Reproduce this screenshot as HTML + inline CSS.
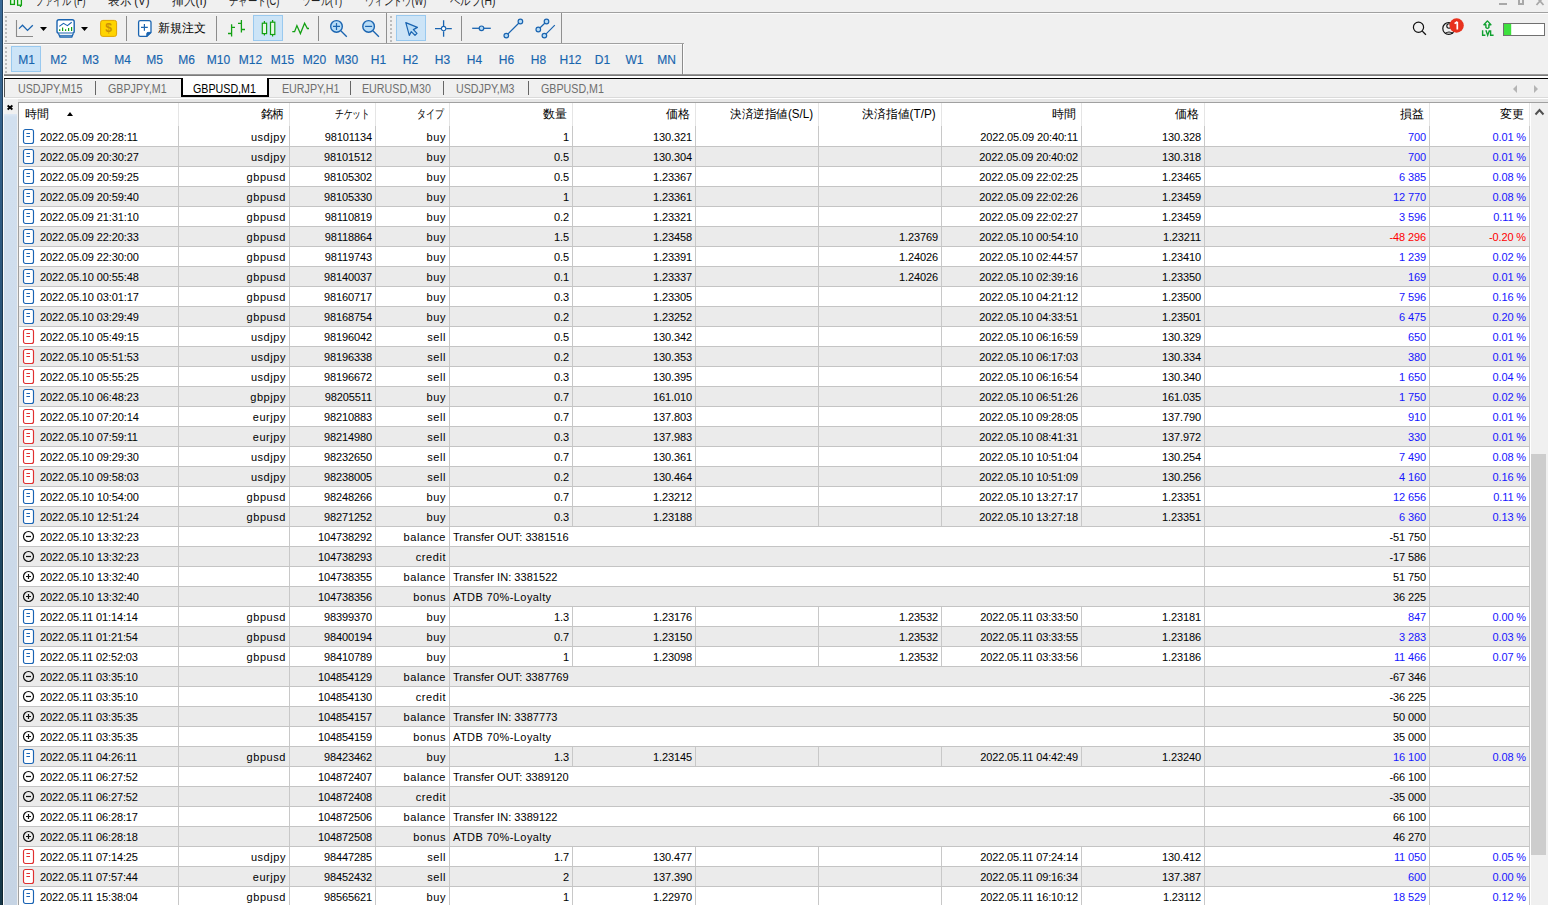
<!DOCTYPE html><html><head><meta charset="utf-8"><style>
*{margin:0;padding:0;box-sizing:border-box}
html,body{width:1548px;height:905px;overflow:hidden;background:#f0f0f0;font-family:"Liberation Sans", sans-serif;font-size:11px;color:#000;position:relative}
.a{position:absolute}
.t{position:absolute;white-space:nowrap;line-height:20px;letter-spacing:-0.12px}
.r{text-align:right}
.hl{position:absolute;height:1px}
.vl{position:absolute;width:1px}
.tf{position:absolute;top:47px;height:26px;width:31px;text-align:center;line-height:26px;color:#1865ae;font-size:12px;-webkit-text-stroke:0.15px #1865ae}
.tab{position:absolute;top:80px;line-height:18px;color:#6e6e6e;font-size:12px;white-space:nowrap;transform:scaleX(0.89);transform-origin:left}
.mn{position:absolute;top:-6px;line-height:14px;color:#222;font-size:12px;white-space:nowrap}
</style></head><body><div class="a" style="left:0;top:0;width:3px;height:905px;background:linear-gradient(#3a6a98,#2a5478 35%,#1a4258 75%,#173848)"></div>
<div class="a" style="left:2px;top:0;width:1px;height:905px;background:rgba(0,0,0,0.35)"></div>
<div class="a" style="left:3px;top:0;width:1px;height:905px;background:#fafafa"></div>
<div class="mn" style="left:35px;transform:scaleX(0.76);transform-origin:left">ファイル (F)</div>
<div class="mn" style="left:108px;transform:scaleX(0.96);transform-origin:left">表示 (V)</div>
<div class="mn" style="left:172px;transform:scaleX(0.98);transform-origin:left">挿入(I)</div>
<div class="mn" style="left:229px;transform:scaleX(0.78);transform-origin:left">チャート(C)</div>
<div class="mn" style="left:302px;transform:scaleX(0.78);transform-origin:left">ツール(T)</div>
<div class="mn" style="left:365px;transform:scaleX(0.775);transform-origin:left">ウィンドウ(W)</div>
<div class="mn" style="left:450px;transform:scaleX(0.864);transform-origin:left">ヘルプ(H)</div>
<svg class="a" style="left:8px;top:0" width="16" height="10"><path d="M12.5 4.9V7M19.5 5.7V8.8" stroke="#10a010" stroke-width="1.3"/><rect x="10.6" y="-2" width="3.8" height="6.4" fill="#e4ffe4" stroke="#10a010" stroke-width="1.3" transform="translate(-8 0)"/><rect x="17.6" y="-2" width="3.8" height="7.2" fill="#e4ffe4" stroke="#10a010" stroke-width="1.3" transform="translate(-8 0)"/></svg>
<div class="a" style="left:1499px;top:3px;width:8px;height:2px;background:#a8a8a8"></div>
<div class="a" style="left:1518px;top:-3px;width:6px;height:8px;border:2px solid #a8a8a8"></div>
<svg class="a" style="left:1535px;top:0" width="11" height="6"><path d="M1.5 -3L8.5 5M8.5 -3L1.5 5" stroke="#a8a8a8" stroke-width="1.8"/></svg>
<div class="hl" style="left:4px;top:12px;width:1544px;background:#a0a0a0"></div>
<div class="hl" style="left:4px;top:13px;width:1544px;background:#fcfcfc"></div>
<div class="hl" style="left:4px;top:43px;width:680px;background:#a0a0a0"></div>
<div class="hl" style="left:4px;top:44px;width:679px;background:#fcfcfc"></div>
<div class="vl" style="left:683px;top:44px;height:31px;background:#fcfcfc"></div>
<div class="a" style="left:4px;top:74px;width:1544px;height:2px;background:linear-gradient(#a8a8a8,#6c6c6c)"></div>
<div class="a" style="left:4px;top:76px;width:1544px;height:2px;background:#ffffff"></div>
<div class="hl" style="left:4px;top:78px;width:1544px;background:#000"></div>
<div class="a" style="left:11px;top:46px;width:30px;height:26px;background:#cce4f7;border:1px solid #99c9ef"></div>
<div class="tf" style="left:11px">M1</div>
<div class="tf" style="left:43px">M2</div>
<div class="tf" style="left:75px">M3</div>
<div class="tf" style="left:107px">M4</div>
<div class="tf" style="left:139px">M5</div>
<div class="tf" style="left:171px">M6</div>
<div class="tf" style="left:203px">M10</div>
<div class="tf" style="left:235px">M12</div>
<div class="tf" style="left:267px">M15</div>
<div class="tf" style="left:299px">M20</div>
<div class="tf" style="left:331px">M30</div>
<div class="tf" style="left:363px">H1</div>
<div class="tf" style="left:395px">H2</div>
<div class="tf" style="left:427px">H3</div>
<div class="tf" style="left:459px">H4</div>
<div class="tf" style="left:491px">H6</div>
<div class="tf" style="left:523px">H8</div>
<div class="tf" style="left:555px">H12</div>
<div class="tf" style="left:587px">D1</div>
<div class="tf" style="left:619px">W1</div>
<div class="tf" style="left:651px">MN</div>
<div class="vl" style="left:682px;top:44px;height:31px;background:#8c8c8c"></div>
<div class="a" style="left:5px;top:16px;width:2px;height:2px;background:#bcbcbc"></div><div class="a" style="left:5px;top:20px;width:2px;height:2px;background:#bcbcbc"></div><div class="a" style="left:5px;top:24px;width:2px;height:2px;background:#bcbcbc"></div><div class="a" style="left:5px;top:28px;width:2px;height:2px;background:#bcbcbc"></div><div class="a" style="left:5px;top:32px;width:2px;height:2px;background:#bcbcbc"></div><div class="a" style="left:5px;top:36px;width:2px;height:2px;background:#bcbcbc"></div><div class="a" style="left:5px;top:40px;width:2px;height:2px;background:#bcbcbc"></div><div class="a" style="left:390px;top:16px;width:2px;height:2px;background:#bcbcbc"></div><div class="a" style="left:390px;top:20px;width:2px;height:2px;background:#bcbcbc"></div><div class="a" style="left:390px;top:24px;width:2px;height:2px;background:#bcbcbc"></div><div class="a" style="left:390px;top:28px;width:2px;height:2px;background:#bcbcbc"></div><div class="a" style="left:390px;top:32px;width:2px;height:2px;background:#bcbcbc"></div><div class="a" style="left:390px;top:36px;width:2px;height:2px;background:#bcbcbc"></div><div class="a" style="left:390px;top:40px;width:2px;height:2px;background:#bcbcbc"></div><div class="a" style="left:5px;top:47px;width:2px;height:2px;background:#bcbcbc"></div><div class="a" style="left:5px;top:51px;width:2px;height:2px;background:#bcbcbc"></div><div class="a" style="left:5px;top:55px;width:2px;height:2px;background:#bcbcbc"></div><div class="a" style="left:5px;top:59px;width:2px;height:2px;background:#bcbcbc"></div><div class="a" style="left:5px;top:63px;width:2px;height:2px;background:#bcbcbc"></div><div class="a" style="left:5px;top:67px;width:2px;height:2px;background:#bcbcbc"></div><div class="a" style="left:5px;top:71px;width:2px;height:2px;background:#bcbcbc"></div><div class="a" style="left:253px;top:15px;width:30px;height:26px;background:#cce4f7;border:1px solid #99c9ef"></div><div class="a" style="left:396px;top:15px;width:30px;height:26px;background:#cce4f7;border:1px solid #99c9ef"></div><svg class="a" style="left:0;top:13px" width="600" height="30" viewBox="0 13 600 30">
<g fill="none" stroke-linecap="butt">
<!-- line chart axes -->
<path d="M16.5 20 V36.5 H33" stroke="#8a8a8a" stroke-width="1.1"/>
<path d="M19 28.6 L22.5 25.2 L27.5 30.4 L32.8 25.2" stroke="#1a64b0" stroke-width="1.3"/>
<path d="M40 27 H47 L43.5 31 Z" fill="#000" stroke="none"/>
<!-- chart template -->
<rect x="57" y="19.7" width="17.2" height="13.6" rx="2" fill="#fff" stroke="#1a64b0" stroke-width="1.4"/>
<path d="M58.5 33.5 L60 37 H71.8 L73.3 33.5" fill="#fff" stroke="#1a64b0" stroke-width="1.3"/>
<path d="M59.5 35.4 H72.3" stroke="#1a64b0" stroke-width="0.9"/>
<path d="M59.3 26.4 L63.5 23.3 L67.4 25.6 L71.7 22.3" stroke="#1a64b0" stroke-width="1.1"/>
<path d="M59.7 31 V29.2 M62.6 31 V27.4 M65.6 31 V29.2 M68.6 31 V28.1 M71.6 31 V27" stroke="#12a012" stroke-width="1.2"/>
<path d="M81 27 H88 L84.5 31 Z" fill="#000" stroke="none"/>
<!-- dollar -->
<rect x="100.6" y="20.4" width="16" height="16" rx="2.2" fill="#ffd400" stroke="#e0a400" stroke-width="1"/>
<!-- separator -->
<path d="M126.5 16 V41" stroke="#8c8c8c" stroke-width="1"/>
<!-- new order -->
<path d="M140.2 20.6 H149 Q151 20.6 151 22.6 V32.4 L146.8 36.4 H140.2 Q138.6 36.4 138.6 34.8 V22.2 Q138.6 20.6 140.2 20.6 Z" fill="#fff" stroke="#1a64b0" stroke-width="1.3"/>
<path d="M151 32.4 H148 Q146.8 32.4 146.8 33.6 V36.4 Z" fill="#1a64b0" stroke="#1a64b0" stroke-width="1"/>
<path d="M141 27.4 H147.8 M144.4 24 V30.8" stroke="#1a64b0" stroke-width="1.2"/>
<path d="M216.5 16 V41" stroke="#8c8c8c" stroke-width="1"/>
<!-- bar chart -->
<path d="M231.6 24.3 V36.6 M228 33.5 H231.6 M231.6 27.3 H235 M241.4 20.1 V32.4 M238 23.3 H241.4 M241.4 29.5 H245" stroke="#12a012" stroke-width="1.3"/>
<!-- candles (highlight box drawn separately) -->
<path d="M264.4 21 V35.6 M272.6 20.1 V36.6" stroke="#12a012" stroke-width="1.2"/>
<rect x="262.3" y="23.2" width="4.3" height="10.4" fill="#e6f8e6" stroke="#12a012" stroke-width="1.2"/>
<rect x="270.5" y="22.2" width="4.3" height="12.3" fill="#e6f8e6" stroke="#12a012" stroke-width="1.2"/>
<!-- line -->
<path d="M292.3 31.7 H294.6 L296.9 25.6 L300.4 33.6 L304.6 23.3 L307.4 28.5 H309" stroke="#12a012" stroke-width="1.3" stroke-linejoin="miter"/>
<path d="M318.5 16 V41" stroke="#8c8c8c" stroke-width="1"/>
<!-- zoom in -->
<circle cx="336.5" cy="26.4" r="5.8" fill="#b8dcf6" stroke="#1a64b0" stroke-width="1.4"/>
<path d="M333 26.4 H340 M336.5 22.9 V29.9" stroke="#1a64b0" stroke-width="1.2"/>
<path d="M340.8 30.8 L346.8 36.7" stroke="#1a64b0" stroke-width="1.3"/>
<!-- zoom out -->
<circle cx="368.6" cy="26.4" r="5.8" fill="#b8dcf6" stroke="#1a64b0" stroke-width="1.4"/>
<path d="M365.1 26.4 H372.1" stroke="#1a64b0" stroke-width="1.2"/>
<path d="M372.9 30.8 L378.9 36.7" stroke="#1a64b0" stroke-width="1.3"/>
<path d="M386.5 13 V43" stroke="#909090" stroke-width="1"/>
<!-- arrow -->
<path d="M405.8 22.6 L417.4 27.4 L413.4 29.6 L417 33.4 L415 35.4 L411.3 31.6 L409.3 35.4 Z" fill="#b8dcf6" stroke="#1a64b0" stroke-width="1.2" stroke-linejoin="round"/>
<!-- crosshair -->
<path d="M435 28.6 H441 M446.2 28.6 H451.8 M443.6 20.2 V26 M443.6 31.2 V36.8" stroke="#1a64b0" stroke-width="1.3"/>
<circle cx="443.6" cy="28.6" r="2.2" fill="#fff" stroke="#1a64b0" stroke-width="1.1"/>
<path d="M461.5 16 V41" stroke="#8c8c8c" stroke-width="1"/>
<!-- hline -->
<path d="M472.2 28.3 H490.8" stroke="#1a64b0" stroke-width="1.3"/>
<circle cx="481.5" cy="28.3" r="2.3" fill="#b8dcf6" stroke="#1a64b0" stroke-width="1.2"/>
<!-- trend -->
<path d="M506.3 35.6 L520.4 21.5" stroke="#1a64b0" stroke-width="1.2"/>
<circle cx="506.3" cy="35.6" r="2.3" fill="#b8dcf6" stroke="#1a64b0" stroke-width="1.2"/>
<circle cx="520.4" cy="21.5" r="2.3" fill="#b8dcf6" stroke="#1a64b0" stroke-width="1.2"/>
<!-- channel -->
<path d="M538.3 29.5 L546.5 21.5 M544.4 35.6 L554.8 25.2" stroke="#1a64b0" stroke-width="1.2"/>
<circle cx="538.3" cy="29.5" r="2.3" fill="#b8dcf6" stroke="#1a64b0" stroke-width="1.2"/>
<circle cx="546.5" cy="21.5" r="2.3" fill="#b8dcf6" stroke="#1a64b0" stroke-width="1.2"/>
<circle cx="544.4" cy="35.6" r="2.3" fill="#b8dcf6" stroke="#1a64b0" stroke-width="1.2"/>
<path d="M561.5 13 V43" stroke="#909090" stroke-width="1"/>
</g>
</svg><svg class="a" style="left:1400px;top:13px" width="148" height="30" viewBox="1400 13 148 30">
<g fill="none">
<circle cx="1418.5" cy="27.3" r="5.1" stroke="#111" stroke-width="1.2"/>
<path d="M1422.3 31.1 L1425.9 34.8" stroke="#111" stroke-width="1.3"/>
<circle cx="1448.7" cy="28.4" r="5.9" stroke="#111" stroke-width="1.2"/>
<circle cx="1449" cy="26" r="2.2" stroke="#111" stroke-width="1.1"/>
<path d="M1445 33.6 Q1449 30.5 1453 33.6" stroke="#111" stroke-width="1.1"/>
<circle cx="1456.6" cy="25.5" r="7.2" fill="#e8321e"/>
<path d="M1457.3 21.8 V29.6 M1454.6 23.6 L1457.3 21.8" stroke="#fff" stroke-width="1.7"/>
<path d="M1483.9 24.8 L1487.4 20.9 L1490.9 24.8 H1488.9 V27.6 Q1487.4 29.2 1485.9 27.6 V24.8 Z" stroke="#10a030" stroke-width="1.4" fill="none" stroke-linejoin="round"/>
<path d="M1482.6 30.2 V35.2 H1485.4 M1485.9 30.2 L1487.7 35.2 L1489.5 30.2 M1490.6 30.2 V35.2 H1493.6" stroke="#10a030" stroke-width="1.4" fill="none"/>
<rect x="1503.5" y="23.5" width="41" height="12" fill="#fff" stroke="#707070" stroke-width="1"/>
<rect x="1504" y="24" width="7.2" height="11" fill="#3ee03e"/>
</g>

</svg><div class="a" style="left:100px;top:20px;width:17px;height:17px;text-align:center;line-height:17px;font-size:12px;font-weight:bold;color:#c89008">$</div><div class="a" style="left:158px;top:20px;font-size:12px;line-height:16px;white-space:nowrap">新規注文</div>
<div class="a" style="left:4px;top:79px;width:1px;height:18px;background:#555"></div>
<div class="hl" style="left:4px;top:97px;width:1544px;background:#dadada"></div>
<div class="hl" style="left:4px;top:98px;width:1544px;background:#fff"></div>
<div class="a" style="left:18px;top:99px;width:1530px;height:3px;background:#e6e6e6"></div>
<div class="tab" style="left:18px">USDJPY,M15</div>
<div class="tab" style="left:108px">GBPJPY,M1</div>
<div class="tab" style="left:282px">EURJPY,H1</div>
<div class="tab" style="left:362px">EURUSD,M30</div>
<div class="tab" style="left:456px">USDJPY,M3</div>
<div class="tab" style="left:541px">GBPUSD,M1</div>
<div class="vl" style="left:95px;top:81px;height:14px;background:#666"></div>
<div class="vl" style="left:350px;top:81px;height:14px;background:#666"></div>
<div class="vl" style="left:443px;top:81px;height:14px;background:#666"></div>
<div class="vl" style="left:528px;top:81px;height:14px;background:#666"></div>
<div class="a" style="left:181px;top:76px;width:88px;height:21px;background:#fff"></div>
<div class="a" style="left:181px;top:78px;width:88px;height:19px;border:2px solid #000;border-top:none"></div>
<div class="tab" style="left:193px;color:#000">GBPUSD,M1</div>
<div class="a" style="left:1513px;top:85px;width:0;height:0;border-right:4px solid #b4b4b4;border-top:4px solid transparent;border-bottom:4px solid transparent"></div>
<div class="a" style="left:1534px;top:85px;width:0;height:0;border-left:4px solid #b4b4b4;border-top:4px solid transparent;border-bottom:4px solid transparent"></div>
<div class="a" style="left:4px;top:114px;width:13px;height:791px;background:linear-gradient(#dde8f4,#d2e0ef 3px,#c6d4e4)"></div>
<svg class="a" style="left:0;top:100px" width="18" height="14"><path d="M7.6 5.6 L12.4 9.4 M12.4 5.6 L7.6 9.4" stroke="#000" stroke-width="1.9"/></svg>
<div class="a" style="left:18px;top:102px;width:1530px;height:1px;background:#a0a0a0"></div>
<div class="a" style="left:18px;top:102px;width:1px;height:803px;background:#a0a0a0"></div>
<div class="a" style="left:19px;top:103px;width:1511px;height:23px;background:#fff"></div>
<div class="vl" style="left:178px;top:103px;height:23px;background:#e5e5e5"></div>
<div class="vl" style="left:289px;top:103px;height:23px;background:#e5e5e5"></div>
<div class="vl" style="left:375px;top:103px;height:23px;background:#e5e5e5"></div>
<div class="vl" style="left:449px;top:103px;height:23px;background:#e5e5e5"></div>
<div class="vl" style="left:572px;top:103px;height:23px;background:#e5e5e5"></div>
<div class="vl" style="left:695px;top:103px;height:23px;background:#e5e5e5"></div>
<div class="vl" style="left:818px;top:103px;height:23px;background:#e5e5e5"></div>
<div class="vl" style="left:941px;top:103px;height:23px;background:#e5e5e5"></div>
<div class="vl" style="left:1081px;top:103px;height:23px;background:#e5e5e5"></div>
<div class="vl" style="left:1204px;top:103px;height:23px;background:#e5e5e5"></div>
<div class="vl" style="left:1429px;top:103px;height:23px;background:#e5e5e5"></div>
<div class="vl" style="left:1529px;top:103px;height:23px;background:#e5e5e5"></div>
<div class="t" style="left:25px;top:104px;font-size:12px">時間</div>
<div class="t r" style="left:178px;width:106px;top:104px;font-size:12px;letter-spacing:0"><span style="display:inline-block;transform:scaleX(0.97);transform-origin:right">銘柄</span></div>
<div class="t r" style="left:289px;width:81px;top:104px;font-size:12px;letter-spacing:0"><span style="display:inline-block;transform:scaleX(0.73);transform-origin:right">チケット</span></div>
<div class="t r" style="left:375px;width:69px;top:104px;font-size:12px;letter-spacing:0"><span style="display:inline-block;transform:scaleX(0.75);transform-origin:right">タイプ</span></div>
<div class="t r" style="left:449px;width:118px;top:104px;font-size:12px;letter-spacing:0"><span style="display:inline-block;transform:scaleX(1);transform-origin:right">数量</span></div>
<div class="t r" style="left:572px;width:118px;top:104px;font-size:12px;letter-spacing:0"><span style="display:inline-block;transform:scaleX(1);transform-origin:right">価格</span></div>
<div class="t r" style="left:695px;width:118px;top:104px;font-size:12px;letter-spacing:0"><span style="display:inline-block;transform:scaleX(0.965);transform-origin:right">決済逆指値(S/L)</span></div>
<div class="t r" style="left:818px;width:118px;top:104px;font-size:12px;letter-spacing:0"><span style="display:inline-block;transform:scaleX(0.98);transform-origin:right">決済指値(T/P)</span></div>
<div class="t r" style="left:941px;width:135px;top:104px;font-size:12px;letter-spacing:0"><span style="display:inline-block;transform:scaleX(1);transform-origin:right">時間</span></div>
<div class="t r" style="left:1081px;width:118px;top:104px;font-size:12px;letter-spacing:0"><span style="display:inline-block;transform:scaleX(1);transform-origin:right">価格</span></div>
<div class="t r" style="left:1204px;width:220px;top:104px;font-size:12px;letter-spacing:0"><span style="display:inline-block;transform:scaleX(1);transform-origin:right">損益</span></div>
<div class="t r" style="left:1429px;width:95px;top:104px;font-size:12px;letter-spacing:0"><span style="display:inline-block;transform:scaleX(1);transform-origin:right">変更</span></div>
<div class="a" style="left:67px;top:112px;width:0;height:0;border-left:3.5px solid transparent;border-right:3.5px solid transparent;border-bottom:4px solid #000"></div>
<div class="a" style="left:19px;top:126px;width:1511px;height:20px;background:#fff"></div>
<svg class="a" style="left:22px;top:128px" width="14" height="17"><rect x="1.5" y="1.5" width="10" height="14" rx="2" fill="#fff" stroke="#1a64b4" stroke-width="1.15"/><path d="M4.4 5.5h3.6M4.4 8.5h3.6" stroke="#1a64b4" stroke-width="1.1"/></svg>
<div class="t" style="left:40px;top:127px">2022.05.09 20:28:11</div>
<div class="t r" style="left:178px;width:108px;top:127px;letter-spacing:0.55px;">usdjpy</div>
<div class="t r" style="left:289px;width:83px;top:127px;">98101134</div>
<div class="t r" style="left:375px;width:71px;top:127px;letter-spacing:0.55px;">buy</div>
<div class="t r" style="left:449px;width:120px;top:127px;">1</div>
<div class="t r" style="left:572px;width:120px;top:127px;">130.321</div>
<div class="t r" style="left:941px;width:137px;top:127px;">2022.05.09 20:40:11</div>
<div class="t r" style="left:1081px;width:120px;top:127px;">130.328</div>
<div class="t r" style="left:1204px;width:222px;top:127px;color:#1515ff;">700</div>
<div class="t r" style="left:1429px;width:97px;top:127px;color:#1515ff;">0.01 %</div>
<div class="vl" style="left:178px;top:126px;height:20px;background:#c8c8c8"></div>
<div class="vl" style="left:289px;top:126px;height:20px;background:#c8c8c8"></div>
<div class="vl" style="left:375px;top:126px;height:20px;background:#c8c8c8"></div>
<div class="vl" style="left:449px;top:126px;height:20px;background:#c8c8c8"></div>
<div class="vl" style="left:572px;top:126px;height:20px;background:#c8c8c8"></div>
<div class="vl" style="left:695px;top:126px;height:20px;background:#c8c8c8"></div>
<div class="vl" style="left:818px;top:126px;height:20px;background:#c8c8c8"></div>
<div class="vl" style="left:941px;top:126px;height:20px;background:#c8c8c8"></div>
<div class="vl" style="left:1081px;top:126px;height:20px;background:#c8c8c8"></div>
<div class="vl" style="left:1204px;top:126px;height:20px;background:#c8c8c8"></div>
<div class="vl" style="left:1429px;top:126px;height:20px;background:#c8c8c8"></div>
<div class="vl" style="left:1529px;top:126px;height:20px;background:#c8c8c8"></div>
<div class="a" style="left:19px;top:146px;width:1511px;height:20px;background:#ebebeb"></div>
<svg class="a" style="left:22px;top:148px" width="14" height="17"><rect x="1.5" y="1.5" width="10" height="14" rx="2" fill="#fff" stroke="#1a64b4" stroke-width="1.15"/><path d="M4.4 5.5h3.6M4.4 8.5h3.6" stroke="#1a64b4" stroke-width="1.1"/></svg>
<div class="t" style="left:40px;top:147px">2022.05.09 20:30:27</div>
<div class="t r" style="left:178px;width:108px;top:147px;letter-spacing:0.55px;">usdjpy</div>
<div class="t r" style="left:289px;width:83px;top:147px;">98101512</div>
<div class="t r" style="left:375px;width:71px;top:147px;letter-spacing:0.55px;">buy</div>
<div class="t r" style="left:449px;width:120px;top:147px;">0.5</div>
<div class="t r" style="left:572px;width:120px;top:147px;">130.304</div>
<div class="t r" style="left:941px;width:137px;top:147px;">2022.05.09 20:40:02</div>
<div class="t r" style="left:1081px;width:120px;top:147px;">130.318</div>
<div class="t r" style="left:1204px;width:222px;top:147px;color:#1515ff;">700</div>
<div class="t r" style="left:1429px;width:97px;top:147px;color:#1515ff;">0.01 %</div>
<div class="vl" style="left:178px;top:146px;height:20px;background:#c8c8c8"></div>
<div class="vl" style="left:289px;top:146px;height:20px;background:#c8c8c8"></div>
<div class="vl" style="left:375px;top:146px;height:20px;background:#c8c8c8"></div>
<div class="vl" style="left:449px;top:146px;height:20px;background:#c8c8c8"></div>
<div class="vl" style="left:572px;top:146px;height:20px;background:#c8c8c8"></div>
<div class="vl" style="left:695px;top:146px;height:20px;background:#c8c8c8"></div>
<div class="vl" style="left:818px;top:146px;height:20px;background:#c8c8c8"></div>
<div class="vl" style="left:941px;top:146px;height:20px;background:#c8c8c8"></div>
<div class="vl" style="left:1081px;top:146px;height:20px;background:#c8c8c8"></div>
<div class="vl" style="left:1204px;top:146px;height:20px;background:#c8c8c8"></div>
<div class="vl" style="left:1429px;top:146px;height:20px;background:#c8c8c8"></div>
<div class="vl" style="left:1529px;top:146px;height:20px;background:#c8c8c8"></div>
<div class="a" style="left:19px;top:166px;width:1511px;height:20px;background:#fff"></div>
<svg class="a" style="left:22px;top:168px" width="14" height="17"><rect x="1.5" y="1.5" width="10" height="14" rx="2" fill="#fff" stroke="#1a64b4" stroke-width="1.15"/><path d="M4.4 5.5h3.6M4.4 8.5h3.6" stroke="#1a64b4" stroke-width="1.1"/></svg>
<div class="t" style="left:40px;top:167px">2022.05.09 20:59:25</div>
<div class="t r" style="left:178px;width:108px;top:167px;letter-spacing:0.55px;">gbpusd</div>
<div class="t r" style="left:289px;width:83px;top:167px;">98105302</div>
<div class="t r" style="left:375px;width:71px;top:167px;letter-spacing:0.55px;">buy</div>
<div class="t r" style="left:449px;width:120px;top:167px;">0.5</div>
<div class="t r" style="left:572px;width:120px;top:167px;">1.23367</div>
<div class="t r" style="left:941px;width:137px;top:167px;">2022.05.09 22:02:25</div>
<div class="t r" style="left:1081px;width:120px;top:167px;">1.23465</div>
<div class="t r" style="left:1204px;width:222px;top:167px;color:#1515ff;">6 385</div>
<div class="t r" style="left:1429px;width:97px;top:167px;color:#1515ff;">0.08 %</div>
<div class="vl" style="left:178px;top:166px;height:20px;background:#c8c8c8"></div>
<div class="vl" style="left:289px;top:166px;height:20px;background:#c8c8c8"></div>
<div class="vl" style="left:375px;top:166px;height:20px;background:#c8c8c8"></div>
<div class="vl" style="left:449px;top:166px;height:20px;background:#c8c8c8"></div>
<div class="vl" style="left:572px;top:166px;height:20px;background:#c8c8c8"></div>
<div class="vl" style="left:695px;top:166px;height:20px;background:#c8c8c8"></div>
<div class="vl" style="left:818px;top:166px;height:20px;background:#c8c8c8"></div>
<div class="vl" style="left:941px;top:166px;height:20px;background:#c8c8c8"></div>
<div class="vl" style="left:1081px;top:166px;height:20px;background:#c8c8c8"></div>
<div class="vl" style="left:1204px;top:166px;height:20px;background:#c8c8c8"></div>
<div class="vl" style="left:1429px;top:166px;height:20px;background:#c8c8c8"></div>
<div class="vl" style="left:1529px;top:166px;height:20px;background:#c8c8c8"></div>
<div class="a" style="left:19px;top:186px;width:1511px;height:20px;background:#ebebeb"></div>
<svg class="a" style="left:22px;top:188px" width="14" height="17"><rect x="1.5" y="1.5" width="10" height="14" rx="2" fill="#fff" stroke="#1a64b4" stroke-width="1.15"/><path d="M4.4 5.5h3.6M4.4 8.5h3.6" stroke="#1a64b4" stroke-width="1.1"/></svg>
<div class="t" style="left:40px;top:187px">2022.05.09 20:59:40</div>
<div class="t r" style="left:178px;width:108px;top:187px;letter-spacing:0.55px;">gbpusd</div>
<div class="t r" style="left:289px;width:83px;top:187px;">98105330</div>
<div class="t r" style="left:375px;width:71px;top:187px;letter-spacing:0.55px;">buy</div>
<div class="t r" style="left:449px;width:120px;top:187px;">1</div>
<div class="t r" style="left:572px;width:120px;top:187px;">1.23361</div>
<div class="t r" style="left:941px;width:137px;top:187px;">2022.05.09 22:02:26</div>
<div class="t r" style="left:1081px;width:120px;top:187px;">1.23459</div>
<div class="t r" style="left:1204px;width:222px;top:187px;color:#1515ff;">12 770</div>
<div class="t r" style="left:1429px;width:97px;top:187px;color:#1515ff;">0.08 %</div>
<div class="vl" style="left:178px;top:186px;height:20px;background:#c8c8c8"></div>
<div class="vl" style="left:289px;top:186px;height:20px;background:#c8c8c8"></div>
<div class="vl" style="left:375px;top:186px;height:20px;background:#c8c8c8"></div>
<div class="vl" style="left:449px;top:186px;height:20px;background:#c8c8c8"></div>
<div class="vl" style="left:572px;top:186px;height:20px;background:#c8c8c8"></div>
<div class="vl" style="left:695px;top:186px;height:20px;background:#c8c8c8"></div>
<div class="vl" style="left:818px;top:186px;height:20px;background:#c8c8c8"></div>
<div class="vl" style="left:941px;top:186px;height:20px;background:#c8c8c8"></div>
<div class="vl" style="left:1081px;top:186px;height:20px;background:#c8c8c8"></div>
<div class="vl" style="left:1204px;top:186px;height:20px;background:#c8c8c8"></div>
<div class="vl" style="left:1429px;top:186px;height:20px;background:#c8c8c8"></div>
<div class="vl" style="left:1529px;top:186px;height:20px;background:#c8c8c8"></div>
<div class="a" style="left:19px;top:206px;width:1511px;height:20px;background:#fff"></div>
<svg class="a" style="left:22px;top:208px" width="14" height="17"><rect x="1.5" y="1.5" width="10" height="14" rx="2" fill="#fff" stroke="#1a64b4" stroke-width="1.15"/><path d="M4.4 5.5h3.6M4.4 8.5h3.6" stroke="#1a64b4" stroke-width="1.1"/></svg>
<div class="t" style="left:40px;top:207px">2022.05.09 21:31:10</div>
<div class="t r" style="left:178px;width:108px;top:207px;letter-spacing:0.55px;">gbpusd</div>
<div class="t r" style="left:289px;width:83px;top:207px;">98110819</div>
<div class="t r" style="left:375px;width:71px;top:207px;letter-spacing:0.55px;">buy</div>
<div class="t r" style="left:449px;width:120px;top:207px;">0.2</div>
<div class="t r" style="left:572px;width:120px;top:207px;">1.23321</div>
<div class="t r" style="left:941px;width:137px;top:207px;">2022.05.09 22:02:27</div>
<div class="t r" style="left:1081px;width:120px;top:207px;">1.23459</div>
<div class="t r" style="left:1204px;width:222px;top:207px;color:#1515ff;">3 596</div>
<div class="t r" style="left:1429px;width:97px;top:207px;color:#1515ff;">0.11 %</div>
<div class="vl" style="left:178px;top:206px;height:20px;background:#c8c8c8"></div>
<div class="vl" style="left:289px;top:206px;height:20px;background:#c8c8c8"></div>
<div class="vl" style="left:375px;top:206px;height:20px;background:#c8c8c8"></div>
<div class="vl" style="left:449px;top:206px;height:20px;background:#c8c8c8"></div>
<div class="vl" style="left:572px;top:206px;height:20px;background:#c8c8c8"></div>
<div class="vl" style="left:695px;top:206px;height:20px;background:#c8c8c8"></div>
<div class="vl" style="left:818px;top:206px;height:20px;background:#c8c8c8"></div>
<div class="vl" style="left:941px;top:206px;height:20px;background:#c8c8c8"></div>
<div class="vl" style="left:1081px;top:206px;height:20px;background:#c8c8c8"></div>
<div class="vl" style="left:1204px;top:206px;height:20px;background:#c8c8c8"></div>
<div class="vl" style="left:1429px;top:206px;height:20px;background:#c8c8c8"></div>
<div class="vl" style="left:1529px;top:206px;height:20px;background:#c8c8c8"></div>
<div class="a" style="left:19px;top:226px;width:1511px;height:20px;background:#ebebeb"></div>
<svg class="a" style="left:22px;top:228px" width="14" height="17"><rect x="1.5" y="1.5" width="10" height="14" rx="2" fill="#fff" stroke="#1a64b4" stroke-width="1.15"/><path d="M4.4 5.5h3.6M4.4 8.5h3.6" stroke="#1a64b4" stroke-width="1.1"/></svg>
<div class="t" style="left:40px;top:227px">2022.05.09 22:20:33</div>
<div class="t r" style="left:178px;width:108px;top:227px;letter-spacing:0.55px;">gbpusd</div>
<div class="t r" style="left:289px;width:83px;top:227px;">98118864</div>
<div class="t r" style="left:375px;width:71px;top:227px;letter-spacing:0.55px;">buy</div>
<div class="t r" style="left:449px;width:120px;top:227px;">1.5</div>
<div class="t r" style="left:572px;width:120px;top:227px;">1.23458</div>
<div class="t r" style="left:818px;width:120px;top:227px;">1.23769</div>
<div class="t r" style="left:941px;width:137px;top:227px;">2022.05.10 00:54:10</div>
<div class="t r" style="left:1081px;width:120px;top:227px;">1.23211</div>
<div class="t r" style="left:1204px;width:222px;top:227px;color:#ff0000;">-48 296</div>
<div class="t r" style="left:1429px;width:97px;top:227px;color:#ff0000;">-0.20 %</div>
<div class="vl" style="left:178px;top:226px;height:20px;background:#c8c8c8"></div>
<div class="vl" style="left:289px;top:226px;height:20px;background:#c8c8c8"></div>
<div class="vl" style="left:375px;top:226px;height:20px;background:#c8c8c8"></div>
<div class="vl" style="left:449px;top:226px;height:20px;background:#c8c8c8"></div>
<div class="vl" style="left:572px;top:226px;height:20px;background:#c8c8c8"></div>
<div class="vl" style="left:695px;top:226px;height:20px;background:#c8c8c8"></div>
<div class="vl" style="left:818px;top:226px;height:20px;background:#c8c8c8"></div>
<div class="vl" style="left:941px;top:226px;height:20px;background:#c8c8c8"></div>
<div class="vl" style="left:1081px;top:226px;height:20px;background:#c8c8c8"></div>
<div class="vl" style="left:1204px;top:226px;height:20px;background:#c8c8c8"></div>
<div class="vl" style="left:1429px;top:226px;height:20px;background:#c8c8c8"></div>
<div class="vl" style="left:1529px;top:226px;height:20px;background:#c8c8c8"></div>
<div class="a" style="left:19px;top:246px;width:1511px;height:20px;background:#fff"></div>
<svg class="a" style="left:22px;top:248px" width="14" height="17"><rect x="1.5" y="1.5" width="10" height="14" rx="2" fill="#fff" stroke="#1a64b4" stroke-width="1.15"/><path d="M4.4 5.5h3.6M4.4 8.5h3.6" stroke="#1a64b4" stroke-width="1.1"/></svg>
<div class="t" style="left:40px;top:247px">2022.05.09 22:30:00</div>
<div class="t r" style="left:178px;width:108px;top:247px;letter-spacing:0.55px;">gbpusd</div>
<div class="t r" style="left:289px;width:83px;top:247px;">98119743</div>
<div class="t r" style="left:375px;width:71px;top:247px;letter-spacing:0.55px;">buy</div>
<div class="t r" style="left:449px;width:120px;top:247px;">0.5</div>
<div class="t r" style="left:572px;width:120px;top:247px;">1.23391</div>
<div class="t r" style="left:818px;width:120px;top:247px;">1.24026</div>
<div class="t r" style="left:941px;width:137px;top:247px;">2022.05.10 02:44:57</div>
<div class="t r" style="left:1081px;width:120px;top:247px;">1.23410</div>
<div class="t r" style="left:1204px;width:222px;top:247px;color:#1515ff;">1 239</div>
<div class="t r" style="left:1429px;width:97px;top:247px;color:#1515ff;">0.02 %</div>
<div class="vl" style="left:178px;top:246px;height:20px;background:#c8c8c8"></div>
<div class="vl" style="left:289px;top:246px;height:20px;background:#c8c8c8"></div>
<div class="vl" style="left:375px;top:246px;height:20px;background:#c8c8c8"></div>
<div class="vl" style="left:449px;top:246px;height:20px;background:#c8c8c8"></div>
<div class="vl" style="left:572px;top:246px;height:20px;background:#c8c8c8"></div>
<div class="vl" style="left:695px;top:246px;height:20px;background:#c8c8c8"></div>
<div class="vl" style="left:818px;top:246px;height:20px;background:#c8c8c8"></div>
<div class="vl" style="left:941px;top:246px;height:20px;background:#c8c8c8"></div>
<div class="vl" style="left:1081px;top:246px;height:20px;background:#c8c8c8"></div>
<div class="vl" style="left:1204px;top:246px;height:20px;background:#c8c8c8"></div>
<div class="vl" style="left:1429px;top:246px;height:20px;background:#c8c8c8"></div>
<div class="vl" style="left:1529px;top:246px;height:20px;background:#c8c8c8"></div>
<div class="a" style="left:19px;top:266px;width:1511px;height:20px;background:#ebebeb"></div>
<svg class="a" style="left:22px;top:268px" width="14" height="17"><rect x="1.5" y="1.5" width="10" height="14" rx="2" fill="#fff" stroke="#1a64b4" stroke-width="1.15"/><path d="M4.4 5.5h3.6M4.4 8.5h3.6" stroke="#1a64b4" stroke-width="1.1"/></svg>
<div class="t" style="left:40px;top:267px">2022.05.10 00:55:48</div>
<div class="t r" style="left:178px;width:108px;top:267px;letter-spacing:0.55px;">gbpusd</div>
<div class="t r" style="left:289px;width:83px;top:267px;">98140037</div>
<div class="t r" style="left:375px;width:71px;top:267px;letter-spacing:0.55px;">buy</div>
<div class="t r" style="left:449px;width:120px;top:267px;">0.1</div>
<div class="t r" style="left:572px;width:120px;top:267px;">1.23337</div>
<div class="t r" style="left:818px;width:120px;top:267px;">1.24026</div>
<div class="t r" style="left:941px;width:137px;top:267px;">2022.05.10 02:39:16</div>
<div class="t r" style="left:1081px;width:120px;top:267px;">1.23350</div>
<div class="t r" style="left:1204px;width:222px;top:267px;color:#1515ff;">169</div>
<div class="t r" style="left:1429px;width:97px;top:267px;color:#1515ff;">0.01 %</div>
<div class="vl" style="left:178px;top:266px;height:20px;background:#c8c8c8"></div>
<div class="vl" style="left:289px;top:266px;height:20px;background:#c8c8c8"></div>
<div class="vl" style="left:375px;top:266px;height:20px;background:#c8c8c8"></div>
<div class="vl" style="left:449px;top:266px;height:20px;background:#c8c8c8"></div>
<div class="vl" style="left:572px;top:266px;height:20px;background:#c8c8c8"></div>
<div class="vl" style="left:695px;top:266px;height:20px;background:#c8c8c8"></div>
<div class="vl" style="left:818px;top:266px;height:20px;background:#c8c8c8"></div>
<div class="vl" style="left:941px;top:266px;height:20px;background:#c8c8c8"></div>
<div class="vl" style="left:1081px;top:266px;height:20px;background:#c8c8c8"></div>
<div class="vl" style="left:1204px;top:266px;height:20px;background:#c8c8c8"></div>
<div class="vl" style="left:1429px;top:266px;height:20px;background:#c8c8c8"></div>
<div class="vl" style="left:1529px;top:266px;height:20px;background:#c8c8c8"></div>
<div class="a" style="left:19px;top:286px;width:1511px;height:20px;background:#fff"></div>
<svg class="a" style="left:22px;top:288px" width="14" height="17"><rect x="1.5" y="1.5" width="10" height="14" rx="2" fill="#fff" stroke="#1a64b4" stroke-width="1.15"/><path d="M4.4 5.5h3.6M4.4 8.5h3.6" stroke="#1a64b4" stroke-width="1.1"/></svg>
<div class="t" style="left:40px;top:287px">2022.05.10 03:01:17</div>
<div class="t r" style="left:178px;width:108px;top:287px;letter-spacing:0.55px;">gbpusd</div>
<div class="t r" style="left:289px;width:83px;top:287px;">98160717</div>
<div class="t r" style="left:375px;width:71px;top:287px;letter-spacing:0.55px;">buy</div>
<div class="t r" style="left:449px;width:120px;top:287px;">0.3</div>
<div class="t r" style="left:572px;width:120px;top:287px;">1.23305</div>
<div class="t r" style="left:941px;width:137px;top:287px;">2022.05.10 04:21:12</div>
<div class="t r" style="left:1081px;width:120px;top:287px;">1.23500</div>
<div class="t r" style="left:1204px;width:222px;top:287px;color:#1515ff;">7 596</div>
<div class="t r" style="left:1429px;width:97px;top:287px;color:#1515ff;">0.16 %</div>
<div class="vl" style="left:178px;top:286px;height:20px;background:#c8c8c8"></div>
<div class="vl" style="left:289px;top:286px;height:20px;background:#c8c8c8"></div>
<div class="vl" style="left:375px;top:286px;height:20px;background:#c8c8c8"></div>
<div class="vl" style="left:449px;top:286px;height:20px;background:#c8c8c8"></div>
<div class="vl" style="left:572px;top:286px;height:20px;background:#c8c8c8"></div>
<div class="vl" style="left:695px;top:286px;height:20px;background:#c8c8c8"></div>
<div class="vl" style="left:818px;top:286px;height:20px;background:#c8c8c8"></div>
<div class="vl" style="left:941px;top:286px;height:20px;background:#c8c8c8"></div>
<div class="vl" style="left:1081px;top:286px;height:20px;background:#c8c8c8"></div>
<div class="vl" style="left:1204px;top:286px;height:20px;background:#c8c8c8"></div>
<div class="vl" style="left:1429px;top:286px;height:20px;background:#c8c8c8"></div>
<div class="vl" style="left:1529px;top:286px;height:20px;background:#c8c8c8"></div>
<div class="a" style="left:19px;top:306px;width:1511px;height:20px;background:#ebebeb"></div>
<svg class="a" style="left:22px;top:308px" width="14" height="17"><rect x="1.5" y="1.5" width="10" height="14" rx="2" fill="#fff" stroke="#1a64b4" stroke-width="1.15"/><path d="M4.4 5.5h3.6M4.4 8.5h3.6" stroke="#1a64b4" stroke-width="1.1"/></svg>
<div class="t" style="left:40px;top:307px">2022.05.10 03:29:49</div>
<div class="t r" style="left:178px;width:108px;top:307px;letter-spacing:0.55px;">gbpusd</div>
<div class="t r" style="left:289px;width:83px;top:307px;">98168754</div>
<div class="t r" style="left:375px;width:71px;top:307px;letter-spacing:0.55px;">buy</div>
<div class="t r" style="left:449px;width:120px;top:307px;">0.2</div>
<div class="t r" style="left:572px;width:120px;top:307px;">1.23252</div>
<div class="t r" style="left:941px;width:137px;top:307px;">2022.05.10 04:33:51</div>
<div class="t r" style="left:1081px;width:120px;top:307px;">1.23501</div>
<div class="t r" style="left:1204px;width:222px;top:307px;color:#1515ff;">6 475</div>
<div class="t r" style="left:1429px;width:97px;top:307px;color:#1515ff;">0.20 %</div>
<div class="vl" style="left:178px;top:306px;height:20px;background:#c8c8c8"></div>
<div class="vl" style="left:289px;top:306px;height:20px;background:#c8c8c8"></div>
<div class="vl" style="left:375px;top:306px;height:20px;background:#c8c8c8"></div>
<div class="vl" style="left:449px;top:306px;height:20px;background:#c8c8c8"></div>
<div class="vl" style="left:572px;top:306px;height:20px;background:#c8c8c8"></div>
<div class="vl" style="left:695px;top:306px;height:20px;background:#c8c8c8"></div>
<div class="vl" style="left:818px;top:306px;height:20px;background:#c8c8c8"></div>
<div class="vl" style="left:941px;top:306px;height:20px;background:#c8c8c8"></div>
<div class="vl" style="left:1081px;top:306px;height:20px;background:#c8c8c8"></div>
<div class="vl" style="left:1204px;top:306px;height:20px;background:#c8c8c8"></div>
<div class="vl" style="left:1429px;top:306px;height:20px;background:#c8c8c8"></div>
<div class="vl" style="left:1529px;top:306px;height:20px;background:#c8c8c8"></div>
<div class="a" style="left:19px;top:326px;width:1511px;height:20px;background:#fff"></div>
<svg class="a" style="left:22px;top:328px" width="14" height="17"><rect x="1.5" y="1.5" width="10" height="14" rx="2" fill="#fff" stroke="#e03030" stroke-width="1.15"/><path d="M4.4 5.5h3.6M4.4 8.5h3.6" stroke="#e03030" stroke-width="1.1"/></svg>
<div class="t" style="left:40px;top:327px">2022.05.10 05:49:15</div>
<div class="t r" style="left:178px;width:108px;top:327px;letter-spacing:0.55px;">usdjpy</div>
<div class="t r" style="left:289px;width:83px;top:327px;">98196042</div>
<div class="t r" style="left:375px;width:71px;top:327px;letter-spacing:0.55px;">sell</div>
<div class="t r" style="left:449px;width:120px;top:327px;">0.5</div>
<div class="t r" style="left:572px;width:120px;top:327px;">130.342</div>
<div class="t r" style="left:941px;width:137px;top:327px;">2022.05.10 06:16:59</div>
<div class="t r" style="left:1081px;width:120px;top:327px;">130.329</div>
<div class="t r" style="left:1204px;width:222px;top:327px;color:#1515ff;">650</div>
<div class="t r" style="left:1429px;width:97px;top:327px;color:#1515ff;">0.01 %</div>
<div class="vl" style="left:178px;top:326px;height:20px;background:#c8c8c8"></div>
<div class="vl" style="left:289px;top:326px;height:20px;background:#c8c8c8"></div>
<div class="vl" style="left:375px;top:326px;height:20px;background:#c8c8c8"></div>
<div class="vl" style="left:449px;top:326px;height:20px;background:#c8c8c8"></div>
<div class="vl" style="left:572px;top:326px;height:20px;background:#c8c8c8"></div>
<div class="vl" style="left:695px;top:326px;height:20px;background:#c8c8c8"></div>
<div class="vl" style="left:818px;top:326px;height:20px;background:#c8c8c8"></div>
<div class="vl" style="left:941px;top:326px;height:20px;background:#c8c8c8"></div>
<div class="vl" style="left:1081px;top:326px;height:20px;background:#c8c8c8"></div>
<div class="vl" style="left:1204px;top:326px;height:20px;background:#c8c8c8"></div>
<div class="vl" style="left:1429px;top:326px;height:20px;background:#c8c8c8"></div>
<div class="vl" style="left:1529px;top:326px;height:20px;background:#c8c8c8"></div>
<div class="a" style="left:19px;top:346px;width:1511px;height:20px;background:#ebebeb"></div>
<svg class="a" style="left:22px;top:348px" width="14" height="17"><rect x="1.5" y="1.5" width="10" height="14" rx="2" fill="#fff" stroke="#e03030" stroke-width="1.15"/><path d="M4.4 5.5h3.6M4.4 8.5h3.6" stroke="#e03030" stroke-width="1.1"/></svg>
<div class="t" style="left:40px;top:347px">2022.05.10 05:51:53</div>
<div class="t r" style="left:178px;width:108px;top:347px;letter-spacing:0.55px;">usdjpy</div>
<div class="t r" style="left:289px;width:83px;top:347px;">98196338</div>
<div class="t r" style="left:375px;width:71px;top:347px;letter-spacing:0.55px;">sell</div>
<div class="t r" style="left:449px;width:120px;top:347px;">0.2</div>
<div class="t r" style="left:572px;width:120px;top:347px;">130.353</div>
<div class="t r" style="left:941px;width:137px;top:347px;">2022.05.10 06:17:03</div>
<div class="t r" style="left:1081px;width:120px;top:347px;">130.334</div>
<div class="t r" style="left:1204px;width:222px;top:347px;color:#1515ff;">380</div>
<div class="t r" style="left:1429px;width:97px;top:347px;color:#1515ff;">0.01 %</div>
<div class="vl" style="left:178px;top:346px;height:20px;background:#c8c8c8"></div>
<div class="vl" style="left:289px;top:346px;height:20px;background:#c8c8c8"></div>
<div class="vl" style="left:375px;top:346px;height:20px;background:#c8c8c8"></div>
<div class="vl" style="left:449px;top:346px;height:20px;background:#c8c8c8"></div>
<div class="vl" style="left:572px;top:346px;height:20px;background:#c8c8c8"></div>
<div class="vl" style="left:695px;top:346px;height:20px;background:#c8c8c8"></div>
<div class="vl" style="left:818px;top:346px;height:20px;background:#c8c8c8"></div>
<div class="vl" style="left:941px;top:346px;height:20px;background:#c8c8c8"></div>
<div class="vl" style="left:1081px;top:346px;height:20px;background:#c8c8c8"></div>
<div class="vl" style="left:1204px;top:346px;height:20px;background:#c8c8c8"></div>
<div class="vl" style="left:1429px;top:346px;height:20px;background:#c8c8c8"></div>
<div class="vl" style="left:1529px;top:346px;height:20px;background:#c8c8c8"></div>
<div class="a" style="left:19px;top:366px;width:1511px;height:20px;background:#fff"></div>
<svg class="a" style="left:22px;top:368px" width="14" height="17"><rect x="1.5" y="1.5" width="10" height="14" rx="2" fill="#fff" stroke="#e03030" stroke-width="1.15"/><path d="M4.4 5.5h3.6M4.4 8.5h3.6" stroke="#e03030" stroke-width="1.1"/></svg>
<div class="t" style="left:40px;top:367px">2022.05.10 05:55:25</div>
<div class="t r" style="left:178px;width:108px;top:367px;letter-spacing:0.55px;">usdjpy</div>
<div class="t r" style="left:289px;width:83px;top:367px;">98196672</div>
<div class="t r" style="left:375px;width:71px;top:367px;letter-spacing:0.55px;">sell</div>
<div class="t r" style="left:449px;width:120px;top:367px;">0.3</div>
<div class="t r" style="left:572px;width:120px;top:367px;">130.395</div>
<div class="t r" style="left:941px;width:137px;top:367px;">2022.05.10 06:16:54</div>
<div class="t r" style="left:1081px;width:120px;top:367px;">130.340</div>
<div class="t r" style="left:1204px;width:222px;top:367px;color:#1515ff;">1 650</div>
<div class="t r" style="left:1429px;width:97px;top:367px;color:#1515ff;">0.04 %</div>
<div class="vl" style="left:178px;top:366px;height:20px;background:#c8c8c8"></div>
<div class="vl" style="left:289px;top:366px;height:20px;background:#c8c8c8"></div>
<div class="vl" style="left:375px;top:366px;height:20px;background:#c8c8c8"></div>
<div class="vl" style="left:449px;top:366px;height:20px;background:#c8c8c8"></div>
<div class="vl" style="left:572px;top:366px;height:20px;background:#c8c8c8"></div>
<div class="vl" style="left:695px;top:366px;height:20px;background:#c8c8c8"></div>
<div class="vl" style="left:818px;top:366px;height:20px;background:#c8c8c8"></div>
<div class="vl" style="left:941px;top:366px;height:20px;background:#c8c8c8"></div>
<div class="vl" style="left:1081px;top:366px;height:20px;background:#c8c8c8"></div>
<div class="vl" style="left:1204px;top:366px;height:20px;background:#c8c8c8"></div>
<div class="vl" style="left:1429px;top:366px;height:20px;background:#c8c8c8"></div>
<div class="vl" style="left:1529px;top:366px;height:20px;background:#c8c8c8"></div>
<div class="a" style="left:19px;top:386px;width:1511px;height:20px;background:#ebebeb"></div>
<svg class="a" style="left:22px;top:388px" width="14" height="17"><rect x="1.5" y="1.5" width="10" height="14" rx="2" fill="#fff" stroke="#1a64b4" stroke-width="1.15"/><path d="M4.4 5.5h3.6M4.4 8.5h3.6" stroke="#1a64b4" stroke-width="1.1"/></svg>
<div class="t" style="left:40px;top:387px">2022.05.10 06:48:23</div>
<div class="t r" style="left:178px;width:108px;top:387px;letter-spacing:0.55px;">gbpjpy</div>
<div class="t r" style="left:289px;width:83px;top:387px;">98205511</div>
<div class="t r" style="left:375px;width:71px;top:387px;letter-spacing:0.55px;">buy</div>
<div class="t r" style="left:449px;width:120px;top:387px;">0.7</div>
<div class="t r" style="left:572px;width:120px;top:387px;">161.010</div>
<div class="t r" style="left:941px;width:137px;top:387px;">2022.05.10 06:51:26</div>
<div class="t r" style="left:1081px;width:120px;top:387px;">161.035</div>
<div class="t r" style="left:1204px;width:222px;top:387px;color:#1515ff;">1 750</div>
<div class="t r" style="left:1429px;width:97px;top:387px;color:#1515ff;">0.02 %</div>
<div class="vl" style="left:178px;top:386px;height:20px;background:#c8c8c8"></div>
<div class="vl" style="left:289px;top:386px;height:20px;background:#c8c8c8"></div>
<div class="vl" style="left:375px;top:386px;height:20px;background:#c8c8c8"></div>
<div class="vl" style="left:449px;top:386px;height:20px;background:#c8c8c8"></div>
<div class="vl" style="left:572px;top:386px;height:20px;background:#c8c8c8"></div>
<div class="vl" style="left:695px;top:386px;height:20px;background:#c8c8c8"></div>
<div class="vl" style="left:818px;top:386px;height:20px;background:#c8c8c8"></div>
<div class="vl" style="left:941px;top:386px;height:20px;background:#c8c8c8"></div>
<div class="vl" style="left:1081px;top:386px;height:20px;background:#c8c8c8"></div>
<div class="vl" style="left:1204px;top:386px;height:20px;background:#c8c8c8"></div>
<div class="vl" style="left:1429px;top:386px;height:20px;background:#c8c8c8"></div>
<div class="vl" style="left:1529px;top:386px;height:20px;background:#c8c8c8"></div>
<div class="a" style="left:19px;top:406px;width:1511px;height:20px;background:#fff"></div>
<svg class="a" style="left:22px;top:408px" width="14" height="17"><rect x="1.5" y="1.5" width="10" height="14" rx="2" fill="#fff" stroke="#e03030" stroke-width="1.15"/><path d="M4.4 5.5h3.6M4.4 8.5h3.6" stroke="#e03030" stroke-width="1.1"/></svg>
<div class="t" style="left:40px;top:407px">2022.05.10 07:20:14</div>
<div class="t r" style="left:178px;width:108px;top:407px;letter-spacing:0.55px;">eurjpy</div>
<div class="t r" style="left:289px;width:83px;top:407px;">98210883</div>
<div class="t r" style="left:375px;width:71px;top:407px;letter-spacing:0.55px;">sell</div>
<div class="t r" style="left:449px;width:120px;top:407px;">0.7</div>
<div class="t r" style="left:572px;width:120px;top:407px;">137.803</div>
<div class="t r" style="left:941px;width:137px;top:407px;">2022.05.10 09:28:05</div>
<div class="t r" style="left:1081px;width:120px;top:407px;">137.790</div>
<div class="t r" style="left:1204px;width:222px;top:407px;color:#1515ff;">910</div>
<div class="t r" style="left:1429px;width:97px;top:407px;color:#1515ff;">0.01 %</div>
<div class="vl" style="left:178px;top:406px;height:20px;background:#c8c8c8"></div>
<div class="vl" style="left:289px;top:406px;height:20px;background:#c8c8c8"></div>
<div class="vl" style="left:375px;top:406px;height:20px;background:#c8c8c8"></div>
<div class="vl" style="left:449px;top:406px;height:20px;background:#c8c8c8"></div>
<div class="vl" style="left:572px;top:406px;height:20px;background:#c8c8c8"></div>
<div class="vl" style="left:695px;top:406px;height:20px;background:#c8c8c8"></div>
<div class="vl" style="left:818px;top:406px;height:20px;background:#c8c8c8"></div>
<div class="vl" style="left:941px;top:406px;height:20px;background:#c8c8c8"></div>
<div class="vl" style="left:1081px;top:406px;height:20px;background:#c8c8c8"></div>
<div class="vl" style="left:1204px;top:406px;height:20px;background:#c8c8c8"></div>
<div class="vl" style="left:1429px;top:406px;height:20px;background:#c8c8c8"></div>
<div class="vl" style="left:1529px;top:406px;height:20px;background:#c8c8c8"></div>
<div class="a" style="left:19px;top:426px;width:1511px;height:20px;background:#ebebeb"></div>
<svg class="a" style="left:22px;top:428px" width="14" height="17"><rect x="1.5" y="1.5" width="10" height="14" rx="2" fill="#fff" stroke="#e03030" stroke-width="1.15"/><path d="M4.4 5.5h3.6M4.4 8.5h3.6" stroke="#e03030" stroke-width="1.1"/></svg>
<div class="t" style="left:40px;top:427px">2022.05.10 07:59:11</div>
<div class="t r" style="left:178px;width:108px;top:427px;letter-spacing:0.55px;">eurjpy</div>
<div class="t r" style="left:289px;width:83px;top:427px;">98214980</div>
<div class="t r" style="left:375px;width:71px;top:427px;letter-spacing:0.55px;">sell</div>
<div class="t r" style="left:449px;width:120px;top:427px;">0.3</div>
<div class="t r" style="left:572px;width:120px;top:427px;">137.983</div>
<div class="t r" style="left:941px;width:137px;top:427px;">2022.05.10 08:41:31</div>
<div class="t r" style="left:1081px;width:120px;top:427px;">137.972</div>
<div class="t r" style="left:1204px;width:222px;top:427px;color:#1515ff;">330</div>
<div class="t r" style="left:1429px;width:97px;top:427px;color:#1515ff;">0.01 %</div>
<div class="vl" style="left:178px;top:426px;height:20px;background:#c8c8c8"></div>
<div class="vl" style="left:289px;top:426px;height:20px;background:#c8c8c8"></div>
<div class="vl" style="left:375px;top:426px;height:20px;background:#c8c8c8"></div>
<div class="vl" style="left:449px;top:426px;height:20px;background:#c8c8c8"></div>
<div class="vl" style="left:572px;top:426px;height:20px;background:#c8c8c8"></div>
<div class="vl" style="left:695px;top:426px;height:20px;background:#c8c8c8"></div>
<div class="vl" style="left:818px;top:426px;height:20px;background:#c8c8c8"></div>
<div class="vl" style="left:941px;top:426px;height:20px;background:#c8c8c8"></div>
<div class="vl" style="left:1081px;top:426px;height:20px;background:#c8c8c8"></div>
<div class="vl" style="left:1204px;top:426px;height:20px;background:#c8c8c8"></div>
<div class="vl" style="left:1429px;top:426px;height:20px;background:#c8c8c8"></div>
<div class="vl" style="left:1529px;top:426px;height:20px;background:#c8c8c8"></div>
<div class="a" style="left:19px;top:446px;width:1511px;height:20px;background:#fff"></div>
<svg class="a" style="left:22px;top:448px" width="14" height="17"><rect x="1.5" y="1.5" width="10" height="14" rx="2" fill="#fff" stroke="#e03030" stroke-width="1.15"/><path d="M4.4 5.5h3.6M4.4 8.5h3.6" stroke="#e03030" stroke-width="1.1"/></svg>
<div class="t" style="left:40px;top:447px">2022.05.10 09:29:30</div>
<div class="t r" style="left:178px;width:108px;top:447px;letter-spacing:0.55px;">usdjpy</div>
<div class="t r" style="left:289px;width:83px;top:447px;">98232650</div>
<div class="t r" style="left:375px;width:71px;top:447px;letter-spacing:0.55px;">sell</div>
<div class="t r" style="left:449px;width:120px;top:447px;">0.7</div>
<div class="t r" style="left:572px;width:120px;top:447px;">130.361</div>
<div class="t r" style="left:941px;width:137px;top:447px;">2022.05.10 10:51:04</div>
<div class="t r" style="left:1081px;width:120px;top:447px;">130.254</div>
<div class="t r" style="left:1204px;width:222px;top:447px;color:#1515ff;">7 490</div>
<div class="t r" style="left:1429px;width:97px;top:447px;color:#1515ff;">0.08 %</div>
<div class="vl" style="left:178px;top:446px;height:20px;background:#c8c8c8"></div>
<div class="vl" style="left:289px;top:446px;height:20px;background:#c8c8c8"></div>
<div class="vl" style="left:375px;top:446px;height:20px;background:#c8c8c8"></div>
<div class="vl" style="left:449px;top:446px;height:20px;background:#c8c8c8"></div>
<div class="vl" style="left:572px;top:446px;height:20px;background:#c8c8c8"></div>
<div class="vl" style="left:695px;top:446px;height:20px;background:#c8c8c8"></div>
<div class="vl" style="left:818px;top:446px;height:20px;background:#c8c8c8"></div>
<div class="vl" style="left:941px;top:446px;height:20px;background:#c8c8c8"></div>
<div class="vl" style="left:1081px;top:446px;height:20px;background:#c8c8c8"></div>
<div class="vl" style="left:1204px;top:446px;height:20px;background:#c8c8c8"></div>
<div class="vl" style="left:1429px;top:446px;height:20px;background:#c8c8c8"></div>
<div class="vl" style="left:1529px;top:446px;height:20px;background:#c8c8c8"></div>
<div class="a" style="left:19px;top:466px;width:1511px;height:20px;background:#ebebeb"></div>
<svg class="a" style="left:22px;top:468px" width="14" height="17"><rect x="1.5" y="1.5" width="10" height="14" rx="2" fill="#fff" stroke="#e03030" stroke-width="1.15"/><path d="M4.4 5.5h3.6M4.4 8.5h3.6" stroke="#e03030" stroke-width="1.1"/></svg>
<div class="t" style="left:40px;top:467px">2022.05.10 09:58:03</div>
<div class="t r" style="left:178px;width:108px;top:467px;letter-spacing:0.55px;">usdjpy</div>
<div class="t r" style="left:289px;width:83px;top:467px;">98238005</div>
<div class="t r" style="left:375px;width:71px;top:467px;letter-spacing:0.55px;">sell</div>
<div class="t r" style="left:449px;width:120px;top:467px;">0.2</div>
<div class="t r" style="left:572px;width:120px;top:467px;">130.464</div>
<div class="t r" style="left:941px;width:137px;top:467px;">2022.05.10 10:51:09</div>
<div class="t r" style="left:1081px;width:120px;top:467px;">130.256</div>
<div class="t r" style="left:1204px;width:222px;top:467px;color:#1515ff;">4 160</div>
<div class="t r" style="left:1429px;width:97px;top:467px;color:#1515ff;">0.16 %</div>
<div class="vl" style="left:178px;top:466px;height:20px;background:#c8c8c8"></div>
<div class="vl" style="left:289px;top:466px;height:20px;background:#c8c8c8"></div>
<div class="vl" style="left:375px;top:466px;height:20px;background:#c8c8c8"></div>
<div class="vl" style="left:449px;top:466px;height:20px;background:#c8c8c8"></div>
<div class="vl" style="left:572px;top:466px;height:20px;background:#c8c8c8"></div>
<div class="vl" style="left:695px;top:466px;height:20px;background:#c8c8c8"></div>
<div class="vl" style="left:818px;top:466px;height:20px;background:#c8c8c8"></div>
<div class="vl" style="left:941px;top:466px;height:20px;background:#c8c8c8"></div>
<div class="vl" style="left:1081px;top:466px;height:20px;background:#c8c8c8"></div>
<div class="vl" style="left:1204px;top:466px;height:20px;background:#c8c8c8"></div>
<div class="vl" style="left:1429px;top:466px;height:20px;background:#c8c8c8"></div>
<div class="vl" style="left:1529px;top:466px;height:20px;background:#c8c8c8"></div>
<div class="a" style="left:19px;top:486px;width:1511px;height:20px;background:#fff"></div>
<svg class="a" style="left:22px;top:488px" width="14" height="17"><rect x="1.5" y="1.5" width="10" height="14" rx="2" fill="#fff" stroke="#1a64b4" stroke-width="1.15"/><path d="M4.4 5.5h3.6M4.4 8.5h3.6" stroke="#1a64b4" stroke-width="1.1"/></svg>
<div class="t" style="left:40px;top:487px">2022.05.10 10:54:00</div>
<div class="t r" style="left:178px;width:108px;top:487px;letter-spacing:0.55px;">gbpusd</div>
<div class="t r" style="left:289px;width:83px;top:487px;">98248266</div>
<div class="t r" style="left:375px;width:71px;top:487px;letter-spacing:0.55px;">buy</div>
<div class="t r" style="left:449px;width:120px;top:487px;">0.7</div>
<div class="t r" style="left:572px;width:120px;top:487px;">1.23212</div>
<div class="t r" style="left:941px;width:137px;top:487px;">2022.05.10 13:27:17</div>
<div class="t r" style="left:1081px;width:120px;top:487px;">1.23351</div>
<div class="t r" style="left:1204px;width:222px;top:487px;color:#1515ff;">12 656</div>
<div class="t r" style="left:1429px;width:97px;top:487px;color:#1515ff;">0.11 %</div>
<div class="vl" style="left:178px;top:486px;height:20px;background:#c8c8c8"></div>
<div class="vl" style="left:289px;top:486px;height:20px;background:#c8c8c8"></div>
<div class="vl" style="left:375px;top:486px;height:20px;background:#c8c8c8"></div>
<div class="vl" style="left:449px;top:486px;height:20px;background:#c8c8c8"></div>
<div class="vl" style="left:572px;top:486px;height:20px;background:#c8c8c8"></div>
<div class="vl" style="left:695px;top:486px;height:20px;background:#c8c8c8"></div>
<div class="vl" style="left:818px;top:486px;height:20px;background:#c8c8c8"></div>
<div class="vl" style="left:941px;top:486px;height:20px;background:#c8c8c8"></div>
<div class="vl" style="left:1081px;top:486px;height:20px;background:#c8c8c8"></div>
<div class="vl" style="left:1204px;top:486px;height:20px;background:#c8c8c8"></div>
<div class="vl" style="left:1429px;top:486px;height:20px;background:#c8c8c8"></div>
<div class="vl" style="left:1529px;top:486px;height:20px;background:#c8c8c8"></div>
<div class="a" style="left:19px;top:506px;width:1511px;height:20px;background:#ebebeb"></div>
<svg class="a" style="left:22px;top:508px" width="14" height="17"><rect x="1.5" y="1.5" width="10" height="14" rx="2" fill="#fff" stroke="#1a64b4" stroke-width="1.15"/><path d="M4.4 5.5h3.6M4.4 8.5h3.6" stroke="#1a64b4" stroke-width="1.1"/></svg>
<div class="t" style="left:40px;top:507px">2022.05.10 12:51:24</div>
<div class="t r" style="left:178px;width:108px;top:507px;letter-spacing:0.55px;">gbpusd</div>
<div class="t r" style="left:289px;width:83px;top:507px;">98271252</div>
<div class="t r" style="left:375px;width:71px;top:507px;letter-spacing:0.55px;">buy</div>
<div class="t r" style="left:449px;width:120px;top:507px;">0.3</div>
<div class="t r" style="left:572px;width:120px;top:507px;">1.23188</div>
<div class="t r" style="left:941px;width:137px;top:507px;">2022.05.10 13:27:18</div>
<div class="t r" style="left:1081px;width:120px;top:507px;">1.23351</div>
<div class="t r" style="left:1204px;width:222px;top:507px;color:#1515ff;">6 360</div>
<div class="t r" style="left:1429px;width:97px;top:507px;color:#1515ff;">0.13 %</div>
<div class="vl" style="left:178px;top:506px;height:20px;background:#c8c8c8"></div>
<div class="vl" style="left:289px;top:506px;height:20px;background:#c8c8c8"></div>
<div class="vl" style="left:375px;top:506px;height:20px;background:#c8c8c8"></div>
<div class="vl" style="left:449px;top:506px;height:20px;background:#c8c8c8"></div>
<div class="vl" style="left:572px;top:506px;height:20px;background:#c8c8c8"></div>
<div class="vl" style="left:695px;top:506px;height:20px;background:#c8c8c8"></div>
<div class="vl" style="left:818px;top:506px;height:20px;background:#c8c8c8"></div>
<div class="vl" style="left:941px;top:506px;height:20px;background:#c8c8c8"></div>
<div class="vl" style="left:1081px;top:506px;height:20px;background:#c8c8c8"></div>
<div class="vl" style="left:1204px;top:506px;height:20px;background:#c8c8c8"></div>
<div class="vl" style="left:1429px;top:506px;height:20px;background:#c8c8c8"></div>
<div class="vl" style="left:1529px;top:506px;height:20px;background:#c8c8c8"></div>
<div class="a" style="left:19px;top:526px;width:1511px;height:20px;background:#fff"></div>
<svg class="a" style="left:21px;top:528px" width="16" height="16"><circle cx="7.5" cy="8.5" r="5" fill="none" stroke="#111" stroke-width="1.2"/><path d="M5 8.5h5" stroke="#111" stroke-width="1.2"/></svg>
<div class="t" style="left:40px;top:527px">2022.05.10 13:32:23</div>
<div class="t r" style="left:289px;width:83px;top:527px;">104738292</div>
<div class="t r" style="left:375px;width:71px;top:527px;letter-spacing:0.55px;">balance</div>
<div class="t" style="left:453px;top:527px;letter-spacing:0.05px">Transfer OUT: 3381516</div>
<div class="t r" style="left:1204px;width:222px;top:527px">-51 750</div>
<div class="vl" style="left:178px;top:526px;height:20px;background:#c8c8c8"></div>
<div class="vl" style="left:289px;top:526px;height:20px;background:#c8c8c8"></div>
<div class="vl" style="left:375px;top:526px;height:20px;background:#c8c8c8"></div>
<div class="vl" style="left:449px;top:526px;height:20px;background:#c8c8c8"></div>
<div class="vl" style="left:1204px;top:526px;height:20px;background:#c8c8c8"></div>
<div class="vl" style="left:1429px;top:526px;height:20px;background:#c8c8c8"></div>
<div class="vl" style="left:1529px;top:526px;height:20px;background:#c8c8c8"></div>
<div class="a" style="left:19px;top:546px;width:1511px;height:20px;background:#ebebeb"></div>
<svg class="a" style="left:21px;top:548px" width="16" height="16"><circle cx="7.5" cy="8.5" r="5" fill="none" stroke="#111" stroke-width="1.2"/><path d="M5 8.5h5" stroke="#111" stroke-width="1.2"/></svg>
<div class="t" style="left:40px;top:547px">2022.05.10 13:32:23</div>
<div class="t r" style="left:289px;width:83px;top:547px;">104738293</div>
<div class="t r" style="left:375px;width:71px;top:547px;letter-spacing:0.55px;">credit</div>
<div class="t r" style="left:1204px;width:222px;top:547px">-17 586</div>
<div class="vl" style="left:178px;top:546px;height:20px;background:#c8c8c8"></div>
<div class="vl" style="left:289px;top:546px;height:20px;background:#c8c8c8"></div>
<div class="vl" style="left:375px;top:546px;height:20px;background:#c8c8c8"></div>
<div class="vl" style="left:449px;top:546px;height:20px;background:#c8c8c8"></div>
<div class="vl" style="left:1204px;top:546px;height:20px;background:#c8c8c8"></div>
<div class="vl" style="left:1429px;top:546px;height:20px;background:#c8c8c8"></div>
<div class="vl" style="left:1529px;top:546px;height:20px;background:#c8c8c8"></div>
<div class="a" style="left:19px;top:566px;width:1511px;height:20px;background:#fff"></div>
<svg class="a" style="left:21px;top:568px" width="16" height="16"><circle cx="7.5" cy="8.5" r="5" fill="none" stroke="#111" stroke-width="1.2"/><path d="M5 8.5h5M7.5 6v5" stroke="#111" stroke-width="1.2"/></svg>
<div class="t" style="left:40px;top:567px">2022.05.10 13:32:40</div>
<div class="t r" style="left:289px;width:83px;top:567px;">104738355</div>
<div class="t r" style="left:375px;width:71px;top:567px;letter-spacing:0.55px;">balance</div>
<div class="t" style="left:453px;top:567px;letter-spacing:0.05px">Transfer IN: 3381522</div>
<div class="t r" style="left:1204px;width:222px;top:567px">51 750</div>
<div class="vl" style="left:178px;top:566px;height:20px;background:#c8c8c8"></div>
<div class="vl" style="left:289px;top:566px;height:20px;background:#c8c8c8"></div>
<div class="vl" style="left:375px;top:566px;height:20px;background:#c8c8c8"></div>
<div class="vl" style="left:449px;top:566px;height:20px;background:#c8c8c8"></div>
<div class="vl" style="left:1204px;top:566px;height:20px;background:#c8c8c8"></div>
<div class="vl" style="left:1429px;top:566px;height:20px;background:#c8c8c8"></div>
<div class="vl" style="left:1529px;top:566px;height:20px;background:#c8c8c8"></div>
<div class="a" style="left:19px;top:586px;width:1511px;height:20px;background:#ebebeb"></div>
<svg class="a" style="left:21px;top:588px" width="16" height="16"><circle cx="7.5" cy="8.5" r="5" fill="none" stroke="#111" stroke-width="1.2"/><path d="M5 8.5h5M7.5 6v5" stroke="#111" stroke-width="1.2"/></svg>
<div class="t" style="left:40px;top:587px">2022.05.10 13:32:40</div>
<div class="t r" style="left:289px;width:83px;top:587px;">104738356</div>
<div class="t r" style="left:375px;width:71px;top:587px;letter-spacing:0.55px;">bonus</div>
<div class="t" style="left:453px;top:587px;letter-spacing:0.4px">ATDB 70%-Loyalty</div>
<div class="t r" style="left:1204px;width:222px;top:587px">36 225</div>
<div class="vl" style="left:178px;top:586px;height:20px;background:#c8c8c8"></div>
<div class="vl" style="left:289px;top:586px;height:20px;background:#c8c8c8"></div>
<div class="vl" style="left:375px;top:586px;height:20px;background:#c8c8c8"></div>
<div class="vl" style="left:449px;top:586px;height:20px;background:#c8c8c8"></div>
<div class="vl" style="left:1204px;top:586px;height:20px;background:#c8c8c8"></div>
<div class="vl" style="left:1429px;top:586px;height:20px;background:#c8c8c8"></div>
<div class="vl" style="left:1529px;top:586px;height:20px;background:#c8c8c8"></div>
<div class="a" style="left:19px;top:606px;width:1511px;height:20px;background:#fff"></div>
<svg class="a" style="left:22px;top:608px" width="14" height="17"><rect x="1.5" y="1.5" width="10" height="14" rx="2" fill="#fff" stroke="#1a64b4" stroke-width="1.15"/><path d="M4.4 5.5h3.6M4.4 8.5h3.6" stroke="#1a64b4" stroke-width="1.1"/></svg>
<div class="t" style="left:40px;top:607px">2022.05.11 01:14:14</div>
<div class="t r" style="left:178px;width:108px;top:607px;letter-spacing:0.55px;">gbpusd</div>
<div class="t r" style="left:289px;width:83px;top:607px;">98399370</div>
<div class="t r" style="left:375px;width:71px;top:607px;letter-spacing:0.55px;">buy</div>
<div class="t r" style="left:449px;width:120px;top:607px;">1.3</div>
<div class="t r" style="left:572px;width:120px;top:607px;">1.23176</div>
<div class="t r" style="left:818px;width:120px;top:607px;">1.23532</div>
<div class="t r" style="left:941px;width:137px;top:607px;">2022.05.11 03:33:50</div>
<div class="t r" style="left:1081px;width:120px;top:607px;">1.23181</div>
<div class="t r" style="left:1204px;width:222px;top:607px;color:#1515ff;">847</div>
<div class="t r" style="left:1429px;width:97px;top:607px;color:#1515ff;">0.00 %</div>
<div class="vl" style="left:178px;top:606px;height:20px;background:#c8c8c8"></div>
<div class="vl" style="left:289px;top:606px;height:20px;background:#c8c8c8"></div>
<div class="vl" style="left:375px;top:606px;height:20px;background:#c8c8c8"></div>
<div class="vl" style="left:449px;top:606px;height:20px;background:#c8c8c8"></div>
<div class="vl" style="left:572px;top:606px;height:20px;background:#c8c8c8"></div>
<div class="vl" style="left:695px;top:606px;height:20px;background:#c8c8c8"></div>
<div class="vl" style="left:818px;top:606px;height:20px;background:#c8c8c8"></div>
<div class="vl" style="left:941px;top:606px;height:20px;background:#c8c8c8"></div>
<div class="vl" style="left:1081px;top:606px;height:20px;background:#c8c8c8"></div>
<div class="vl" style="left:1204px;top:606px;height:20px;background:#c8c8c8"></div>
<div class="vl" style="left:1429px;top:606px;height:20px;background:#c8c8c8"></div>
<div class="vl" style="left:1529px;top:606px;height:20px;background:#c8c8c8"></div>
<div class="a" style="left:19px;top:626px;width:1511px;height:20px;background:#ebebeb"></div>
<svg class="a" style="left:22px;top:628px" width="14" height="17"><rect x="1.5" y="1.5" width="10" height="14" rx="2" fill="#fff" stroke="#1a64b4" stroke-width="1.15"/><path d="M4.4 5.5h3.6M4.4 8.5h3.6" stroke="#1a64b4" stroke-width="1.1"/></svg>
<div class="t" style="left:40px;top:627px">2022.05.11 01:21:54</div>
<div class="t r" style="left:178px;width:108px;top:627px;letter-spacing:0.55px;">gbpusd</div>
<div class="t r" style="left:289px;width:83px;top:627px;">98400194</div>
<div class="t r" style="left:375px;width:71px;top:627px;letter-spacing:0.55px;">buy</div>
<div class="t r" style="left:449px;width:120px;top:627px;">0.7</div>
<div class="t r" style="left:572px;width:120px;top:627px;">1.23150</div>
<div class="t r" style="left:818px;width:120px;top:627px;">1.23532</div>
<div class="t r" style="left:941px;width:137px;top:627px;">2022.05.11 03:33:55</div>
<div class="t r" style="left:1081px;width:120px;top:627px;">1.23186</div>
<div class="t r" style="left:1204px;width:222px;top:627px;color:#1515ff;">3 283</div>
<div class="t r" style="left:1429px;width:97px;top:627px;color:#1515ff;">0.03 %</div>
<div class="vl" style="left:178px;top:626px;height:20px;background:#c8c8c8"></div>
<div class="vl" style="left:289px;top:626px;height:20px;background:#c8c8c8"></div>
<div class="vl" style="left:375px;top:626px;height:20px;background:#c8c8c8"></div>
<div class="vl" style="left:449px;top:626px;height:20px;background:#c8c8c8"></div>
<div class="vl" style="left:572px;top:626px;height:20px;background:#c8c8c8"></div>
<div class="vl" style="left:695px;top:626px;height:20px;background:#c8c8c8"></div>
<div class="vl" style="left:818px;top:626px;height:20px;background:#c8c8c8"></div>
<div class="vl" style="left:941px;top:626px;height:20px;background:#c8c8c8"></div>
<div class="vl" style="left:1081px;top:626px;height:20px;background:#c8c8c8"></div>
<div class="vl" style="left:1204px;top:626px;height:20px;background:#c8c8c8"></div>
<div class="vl" style="left:1429px;top:626px;height:20px;background:#c8c8c8"></div>
<div class="vl" style="left:1529px;top:626px;height:20px;background:#c8c8c8"></div>
<div class="a" style="left:19px;top:646px;width:1511px;height:20px;background:#fff"></div>
<svg class="a" style="left:22px;top:648px" width="14" height="17"><rect x="1.5" y="1.5" width="10" height="14" rx="2" fill="#fff" stroke="#1a64b4" stroke-width="1.15"/><path d="M4.4 5.5h3.6M4.4 8.5h3.6" stroke="#1a64b4" stroke-width="1.1"/></svg>
<div class="t" style="left:40px;top:647px">2022.05.11 02:52:03</div>
<div class="t r" style="left:178px;width:108px;top:647px;letter-spacing:0.55px;">gbpusd</div>
<div class="t r" style="left:289px;width:83px;top:647px;">98410789</div>
<div class="t r" style="left:375px;width:71px;top:647px;letter-spacing:0.55px;">buy</div>
<div class="t r" style="left:449px;width:120px;top:647px;">1</div>
<div class="t r" style="left:572px;width:120px;top:647px;">1.23098</div>
<div class="t r" style="left:818px;width:120px;top:647px;">1.23532</div>
<div class="t r" style="left:941px;width:137px;top:647px;">2022.05.11 03:33:56</div>
<div class="t r" style="left:1081px;width:120px;top:647px;">1.23186</div>
<div class="t r" style="left:1204px;width:222px;top:647px;color:#1515ff;">11 466</div>
<div class="t r" style="left:1429px;width:97px;top:647px;color:#1515ff;">0.07 %</div>
<div class="vl" style="left:178px;top:646px;height:20px;background:#c8c8c8"></div>
<div class="vl" style="left:289px;top:646px;height:20px;background:#c8c8c8"></div>
<div class="vl" style="left:375px;top:646px;height:20px;background:#c8c8c8"></div>
<div class="vl" style="left:449px;top:646px;height:20px;background:#c8c8c8"></div>
<div class="vl" style="left:572px;top:646px;height:20px;background:#c8c8c8"></div>
<div class="vl" style="left:695px;top:646px;height:20px;background:#c8c8c8"></div>
<div class="vl" style="left:818px;top:646px;height:20px;background:#c8c8c8"></div>
<div class="vl" style="left:941px;top:646px;height:20px;background:#c8c8c8"></div>
<div class="vl" style="left:1081px;top:646px;height:20px;background:#c8c8c8"></div>
<div class="vl" style="left:1204px;top:646px;height:20px;background:#c8c8c8"></div>
<div class="vl" style="left:1429px;top:646px;height:20px;background:#c8c8c8"></div>
<div class="vl" style="left:1529px;top:646px;height:20px;background:#c8c8c8"></div>
<div class="a" style="left:19px;top:666px;width:1511px;height:20px;background:#ebebeb"></div>
<svg class="a" style="left:21px;top:668px" width="16" height="16"><circle cx="7.5" cy="8.5" r="5" fill="none" stroke="#111" stroke-width="1.2"/><path d="M5 8.5h5" stroke="#111" stroke-width="1.2"/></svg>
<div class="t" style="left:40px;top:667px">2022.05.11 03:35:10</div>
<div class="t r" style="left:289px;width:83px;top:667px;">104854129</div>
<div class="t r" style="left:375px;width:71px;top:667px;letter-spacing:0.55px;">balance</div>
<div class="t" style="left:453px;top:667px;letter-spacing:0.05px">Transfer OUT: 3387769</div>
<div class="t r" style="left:1204px;width:222px;top:667px">-67 346</div>
<div class="vl" style="left:178px;top:666px;height:20px;background:#c8c8c8"></div>
<div class="vl" style="left:289px;top:666px;height:20px;background:#c8c8c8"></div>
<div class="vl" style="left:375px;top:666px;height:20px;background:#c8c8c8"></div>
<div class="vl" style="left:449px;top:666px;height:20px;background:#c8c8c8"></div>
<div class="vl" style="left:1204px;top:666px;height:20px;background:#c8c8c8"></div>
<div class="vl" style="left:1429px;top:666px;height:20px;background:#c8c8c8"></div>
<div class="vl" style="left:1529px;top:666px;height:20px;background:#c8c8c8"></div>
<div class="a" style="left:19px;top:686px;width:1511px;height:20px;background:#fff"></div>
<svg class="a" style="left:21px;top:688px" width="16" height="16"><circle cx="7.5" cy="8.5" r="5" fill="none" stroke="#111" stroke-width="1.2"/><path d="M5 8.5h5" stroke="#111" stroke-width="1.2"/></svg>
<div class="t" style="left:40px;top:687px">2022.05.11 03:35:10</div>
<div class="t r" style="left:289px;width:83px;top:687px;">104854130</div>
<div class="t r" style="left:375px;width:71px;top:687px;letter-spacing:0.55px;">credit</div>
<div class="t r" style="left:1204px;width:222px;top:687px">-36 225</div>
<div class="vl" style="left:178px;top:686px;height:20px;background:#c8c8c8"></div>
<div class="vl" style="left:289px;top:686px;height:20px;background:#c8c8c8"></div>
<div class="vl" style="left:375px;top:686px;height:20px;background:#c8c8c8"></div>
<div class="vl" style="left:449px;top:686px;height:20px;background:#c8c8c8"></div>
<div class="vl" style="left:1204px;top:686px;height:20px;background:#c8c8c8"></div>
<div class="vl" style="left:1429px;top:686px;height:20px;background:#c8c8c8"></div>
<div class="vl" style="left:1529px;top:686px;height:20px;background:#c8c8c8"></div>
<div class="a" style="left:19px;top:706px;width:1511px;height:20px;background:#ebebeb"></div>
<svg class="a" style="left:21px;top:708px" width="16" height="16"><circle cx="7.5" cy="8.5" r="5" fill="none" stroke="#111" stroke-width="1.2"/><path d="M5 8.5h5M7.5 6v5" stroke="#111" stroke-width="1.2"/></svg>
<div class="t" style="left:40px;top:707px">2022.05.11 03:35:35</div>
<div class="t r" style="left:289px;width:83px;top:707px;">104854157</div>
<div class="t r" style="left:375px;width:71px;top:707px;letter-spacing:0.55px;">balance</div>
<div class="t" style="left:453px;top:707px;letter-spacing:0.05px">Transfer IN: 3387773</div>
<div class="t r" style="left:1204px;width:222px;top:707px">50 000</div>
<div class="vl" style="left:178px;top:706px;height:20px;background:#c8c8c8"></div>
<div class="vl" style="left:289px;top:706px;height:20px;background:#c8c8c8"></div>
<div class="vl" style="left:375px;top:706px;height:20px;background:#c8c8c8"></div>
<div class="vl" style="left:449px;top:706px;height:20px;background:#c8c8c8"></div>
<div class="vl" style="left:1204px;top:706px;height:20px;background:#c8c8c8"></div>
<div class="vl" style="left:1429px;top:706px;height:20px;background:#c8c8c8"></div>
<div class="vl" style="left:1529px;top:706px;height:20px;background:#c8c8c8"></div>
<div class="a" style="left:19px;top:726px;width:1511px;height:20px;background:#fff"></div>
<svg class="a" style="left:21px;top:728px" width="16" height="16"><circle cx="7.5" cy="8.5" r="5" fill="none" stroke="#111" stroke-width="1.2"/><path d="M5 8.5h5M7.5 6v5" stroke="#111" stroke-width="1.2"/></svg>
<div class="t" style="left:40px;top:727px">2022.05.11 03:35:35</div>
<div class="t r" style="left:289px;width:83px;top:727px;">104854159</div>
<div class="t r" style="left:375px;width:71px;top:727px;letter-spacing:0.55px;">bonus</div>
<div class="t" style="left:453px;top:727px;letter-spacing:0.4px">ATDB 70%-Loyalty</div>
<div class="t r" style="left:1204px;width:222px;top:727px">35 000</div>
<div class="vl" style="left:178px;top:726px;height:20px;background:#c8c8c8"></div>
<div class="vl" style="left:289px;top:726px;height:20px;background:#c8c8c8"></div>
<div class="vl" style="left:375px;top:726px;height:20px;background:#c8c8c8"></div>
<div class="vl" style="left:449px;top:726px;height:20px;background:#c8c8c8"></div>
<div class="vl" style="left:1204px;top:726px;height:20px;background:#c8c8c8"></div>
<div class="vl" style="left:1429px;top:726px;height:20px;background:#c8c8c8"></div>
<div class="vl" style="left:1529px;top:726px;height:20px;background:#c8c8c8"></div>
<div class="a" style="left:19px;top:746px;width:1511px;height:20px;background:#ebebeb"></div>
<svg class="a" style="left:22px;top:748px" width="14" height="17"><rect x="1.5" y="1.5" width="10" height="14" rx="2" fill="#fff" stroke="#1a64b4" stroke-width="1.15"/><path d="M4.4 5.5h3.6M4.4 8.5h3.6" stroke="#1a64b4" stroke-width="1.1"/></svg>
<div class="t" style="left:40px;top:747px">2022.05.11 04:26:11</div>
<div class="t r" style="left:178px;width:108px;top:747px;letter-spacing:0.55px;">gbpusd</div>
<div class="t r" style="left:289px;width:83px;top:747px;">98423462</div>
<div class="t r" style="left:375px;width:71px;top:747px;letter-spacing:0.55px;">buy</div>
<div class="t r" style="left:449px;width:120px;top:747px;">1.3</div>
<div class="t r" style="left:572px;width:120px;top:747px;">1.23145</div>
<div class="t r" style="left:941px;width:137px;top:747px;">2022.05.11 04:42:49</div>
<div class="t r" style="left:1081px;width:120px;top:747px;">1.23240</div>
<div class="t r" style="left:1204px;width:222px;top:747px;color:#1515ff;">16 100</div>
<div class="t r" style="left:1429px;width:97px;top:747px;color:#1515ff;">0.08 %</div>
<div class="vl" style="left:178px;top:746px;height:20px;background:#c8c8c8"></div>
<div class="vl" style="left:289px;top:746px;height:20px;background:#c8c8c8"></div>
<div class="vl" style="left:375px;top:746px;height:20px;background:#c8c8c8"></div>
<div class="vl" style="left:449px;top:746px;height:20px;background:#c8c8c8"></div>
<div class="vl" style="left:572px;top:746px;height:20px;background:#c8c8c8"></div>
<div class="vl" style="left:695px;top:746px;height:20px;background:#c8c8c8"></div>
<div class="vl" style="left:818px;top:746px;height:20px;background:#c8c8c8"></div>
<div class="vl" style="left:941px;top:746px;height:20px;background:#c8c8c8"></div>
<div class="vl" style="left:1081px;top:746px;height:20px;background:#c8c8c8"></div>
<div class="vl" style="left:1204px;top:746px;height:20px;background:#c8c8c8"></div>
<div class="vl" style="left:1429px;top:746px;height:20px;background:#c8c8c8"></div>
<div class="vl" style="left:1529px;top:746px;height:20px;background:#c8c8c8"></div>
<div class="a" style="left:19px;top:766px;width:1511px;height:20px;background:#fff"></div>
<svg class="a" style="left:21px;top:768px" width="16" height="16"><circle cx="7.5" cy="8.5" r="5" fill="none" stroke="#111" stroke-width="1.2"/><path d="M5 8.5h5" stroke="#111" stroke-width="1.2"/></svg>
<div class="t" style="left:40px;top:767px">2022.05.11 06:27:52</div>
<div class="t r" style="left:289px;width:83px;top:767px;">104872407</div>
<div class="t r" style="left:375px;width:71px;top:767px;letter-spacing:0.55px;">balance</div>
<div class="t" style="left:453px;top:767px;letter-spacing:0.05px">Transfer OUT: 3389120</div>
<div class="t r" style="left:1204px;width:222px;top:767px">-66 100</div>
<div class="vl" style="left:178px;top:766px;height:20px;background:#c8c8c8"></div>
<div class="vl" style="left:289px;top:766px;height:20px;background:#c8c8c8"></div>
<div class="vl" style="left:375px;top:766px;height:20px;background:#c8c8c8"></div>
<div class="vl" style="left:449px;top:766px;height:20px;background:#c8c8c8"></div>
<div class="vl" style="left:1204px;top:766px;height:20px;background:#c8c8c8"></div>
<div class="vl" style="left:1429px;top:766px;height:20px;background:#c8c8c8"></div>
<div class="vl" style="left:1529px;top:766px;height:20px;background:#c8c8c8"></div>
<div class="a" style="left:19px;top:786px;width:1511px;height:20px;background:#ebebeb"></div>
<svg class="a" style="left:21px;top:788px" width="16" height="16"><circle cx="7.5" cy="8.5" r="5" fill="none" stroke="#111" stroke-width="1.2"/><path d="M5 8.5h5" stroke="#111" stroke-width="1.2"/></svg>
<div class="t" style="left:40px;top:787px">2022.05.11 06:27:52</div>
<div class="t r" style="left:289px;width:83px;top:787px;">104872408</div>
<div class="t r" style="left:375px;width:71px;top:787px;letter-spacing:0.55px;">credit</div>
<div class="t r" style="left:1204px;width:222px;top:787px">-35 000</div>
<div class="vl" style="left:178px;top:786px;height:20px;background:#c8c8c8"></div>
<div class="vl" style="left:289px;top:786px;height:20px;background:#c8c8c8"></div>
<div class="vl" style="left:375px;top:786px;height:20px;background:#c8c8c8"></div>
<div class="vl" style="left:449px;top:786px;height:20px;background:#c8c8c8"></div>
<div class="vl" style="left:1204px;top:786px;height:20px;background:#c8c8c8"></div>
<div class="vl" style="left:1429px;top:786px;height:20px;background:#c8c8c8"></div>
<div class="vl" style="left:1529px;top:786px;height:20px;background:#c8c8c8"></div>
<div class="a" style="left:19px;top:806px;width:1511px;height:20px;background:#fff"></div>
<svg class="a" style="left:21px;top:808px" width="16" height="16"><circle cx="7.5" cy="8.5" r="5" fill="none" stroke="#111" stroke-width="1.2"/><path d="M5 8.5h5M7.5 6v5" stroke="#111" stroke-width="1.2"/></svg>
<div class="t" style="left:40px;top:807px">2022.05.11 06:28:17</div>
<div class="t r" style="left:289px;width:83px;top:807px;">104872506</div>
<div class="t r" style="left:375px;width:71px;top:807px;letter-spacing:0.55px;">balance</div>
<div class="t" style="left:453px;top:807px;letter-spacing:0.05px">Transfer IN: 3389122</div>
<div class="t r" style="left:1204px;width:222px;top:807px">66 100</div>
<div class="vl" style="left:178px;top:806px;height:20px;background:#c8c8c8"></div>
<div class="vl" style="left:289px;top:806px;height:20px;background:#c8c8c8"></div>
<div class="vl" style="left:375px;top:806px;height:20px;background:#c8c8c8"></div>
<div class="vl" style="left:449px;top:806px;height:20px;background:#c8c8c8"></div>
<div class="vl" style="left:1204px;top:806px;height:20px;background:#c8c8c8"></div>
<div class="vl" style="left:1429px;top:806px;height:20px;background:#c8c8c8"></div>
<div class="vl" style="left:1529px;top:806px;height:20px;background:#c8c8c8"></div>
<div class="a" style="left:19px;top:826px;width:1511px;height:20px;background:#ebebeb"></div>
<svg class="a" style="left:21px;top:828px" width="16" height="16"><circle cx="7.5" cy="8.5" r="5" fill="none" stroke="#111" stroke-width="1.2"/><path d="M5 8.5h5M7.5 6v5" stroke="#111" stroke-width="1.2"/></svg>
<div class="t" style="left:40px;top:827px">2022.05.11 06:28:18</div>
<div class="t r" style="left:289px;width:83px;top:827px;">104872508</div>
<div class="t r" style="left:375px;width:71px;top:827px;letter-spacing:0.55px;">bonus</div>
<div class="t" style="left:453px;top:827px;letter-spacing:0.4px">ATDB 70%-Loyalty</div>
<div class="t r" style="left:1204px;width:222px;top:827px">46 270</div>
<div class="vl" style="left:178px;top:826px;height:20px;background:#c8c8c8"></div>
<div class="vl" style="left:289px;top:826px;height:20px;background:#c8c8c8"></div>
<div class="vl" style="left:375px;top:826px;height:20px;background:#c8c8c8"></div>
<div class="vl" style="left:449px;top:826px;height:20px;background:#c8c8c8"></div>
<div class="vl" style="left:1204px;top:826px;height:20px;background:#c8c8c8"></div>
<div class="vl" style="left:1429px;top:826px;height:20px;background:#c8c8c8"></div>
<div class="vl" style="left:1529px;top:826px;height:20px;background:#c8c8c8"></div>
<div class="a" style="left:19px;top:846px;width:1511px;height:20px;background:#fff"></div>
<svg class="a" style="left:22px;top:848px" width="14" height="17"><rect x="1.5" y="1.5" width="10" height="14" rx="2" fill="#fff" stroke="#e03030" stroke-width="1.15"/><path d="M4.4 5.5h3.6M4.4 8.5h3.6" stroke="#e03030" stroke-width="1.1"/></svg>
<div class="t" style="left:40px;top:847px">2022.05.11 07:14:25</div>
<div class="t r" style="left:178px;width:108px;top:847px;letter-spacing:0.55px;">usdjpy</div>
<div class="t r" style="left:289px;width:83px;top:847px;">98447285</div>
<div class="t r" style="left:375px;width:71px;top:847px;letter-spacing:0.55px;">sell</div>
<div class="t r" style="left:449px;width:120px;top:847px;">1.7</div>
<div class="t r" style="left:572px;width:120px;top:847px;">130.477</div>
<div class="t r" style="left:941px;width:137px;top:847px;">2022.05.11 07:24:14</div>
<div class="t r" style="left:1081px;width:120px;top:847px;">130.412</div>
<div class="t r" style="left:1204px;width:222px;top:847px;color:#1515ff;">11 050</div>
<div class="t r" style="left:1429px;width:97px;top:847px;color:#1515ff;">0.05 %</div>
<div class="vl" style="left:178px;top:846px;height:20px;background:#c8c8c8"></div>
<div class="vl" style="left:289px;top:846px;height:20px;background:#c8c8c8"></div>
<div class="vl" style="left:375px;top:846px;height:20px;background:#c8c8c8"></div>
<div class="vl" style="left:449px;top:846px;height:20px;background:#c8c8c8"></div>
<div class="vl" style="left:572px;top:846px;height:20px;background:#c8c8c8"></div>
<div class="vl" style="left:695px;top:846px;height:20px;background:#c8c8c8"></div>
<div class="vl" style="left:818px;top:846px;height:20px;background:#c8c8c8"></div>
<div class="vl" style="left:941px;top:846px;height:20px;background:#c8c8c8"></div>
<div class="vl" style="left:1081px;top:846px;height:20px;background:#c8c8c8"></div>
<div class="vl" style="left:1204px;top:846px;height:20px;background:#c8c8c8"></div>
<div class="vl" style="left:1429px;top:846px;height:20px;background:#c8c8c8"></div>
<div class="vl" style="left:1529px;top:846px;height:20px;background:#c8c8c8"></div>
<div class="a" style="left:19px;top:866px;width:1511px;height:20px;background:#ebebeb"></div>
<svg class="a" style="left:22px;top:868px" width="14" height="17"><rect x="1.5" y="1.5" width="10" height="14" rx="2" fill="#fff" stroke="#e03030" stroke-width="1.15"/><path d="M4.4 5.5h3.6M4.4 8.5h3.6" stroke="#e03030" stroke-width="1.1"/></svg>
<div class="t" style="left:40px;top:867px">2022.05.11 07:57:44</div>
<div class="t r" style="left:178px;width:108px;top:867px;letter-spacing:0.55px;">eurjpy</div>
<div class="t r" style="left:289px;width:83px;top:867px;">98452432</div>
<div class="t r" style="left:375px;width:71px;top:867px;letter-spacing:0.55px;">sell</div>
<div class="t r" style="left:449px;width:120px;top:867px;">2</div>
<div class="t r" style="left:572px;width:120px;top:867px;">137.390</div>
<div class="t r" style="left:941px;width:137px;top:867px;">2022.05.11 09:16:34</div>
<div class="t r" style="left:1081px;width:120px;top:867px;">137.387</div>
<div class="t r" style="left:1204px;width:222px;top:867px;color:#1515ff;">600</div>
<div class="t r" style="left:1429px;width:97px;top:867px;color:#1515ff;">0.00 %</div>
<div class="vl" style="left:178px;top:866px;height:20px;background:#c8c8c8"></div>
<div class="vl" style="left:289px;top:866px;height:20px;background:#c8c8c8"></div>
<div class="vl" style="left:375px;top:866px;height:20px;background:#c8c8c8"></div>
<div class="vl" style="left:449px;top:866px;height:20px;background:#c8c8c8"></div>
<div class="vl" style="left:572px;top:866px;height:20px;background:#c8c8c8"></div>
<div class="vl" style="left:695px;top:866px;height:20px;background:#c8c8c8"></div>
<div class="vl" style="left:818px;top:866px;height:20px;background:#c8c8c8"></div>
<div class="vl" style="left:941px;top:866px;height:20px;background:#c8c8c8"></div>
<div class="vl" style="left:1081px;top:866px;height:20px;background:#c8c8c8"></div>
<div class="vl" style="left:1204px;top:866px;height:20px;background:#c8c8c8"></div>
<div class="vl" style="left:1429px;top:866px;height:20px;background:#c8c8c8"></div>
<div class="vl" style="left:1529px;top:866px;height:20px;background:#c8c8c8"></div>
<div class="a" style="left:19px;top:886px;width:1511px;height:20px;background:#fff"></div>
<svg class="a" style="left:22px;top:888px" width="14" height="17"><rect x="1.5" y="1.5" width="10" height="14" rx="2" fill="#fff" stroke="#1a64b4" stroke-width="1.15"/><path d="M4.4 5.5h3.6M4.4 8.5h3.6" stroke="#1a64b4" stroke-width="1.1"/></svg>
<div class="t" style="left:40px;top:887px">2022.05.11 15:38:04</div>
<div class="t r" style="left:178px;width:108px;top:887px;letter-spacing:0.55px;">gbpusd</div>
<div class="t r" style="left:289px;width:83px;top:887px;">98565621</div>
<div class="t r" style="left:375px;width:71px;top:887px;letter-spacing:0.55px;">buy</div>
<div class="t r" style="left:449px;width:120px;top:887px;">1</div>
<div class="t r" style="left:572px;width:120px;top:887px;">1.22970</div>
<div class="t r" style="left:941px;width:137px;top:887px;">2022.05.11 16:10:12</div>
<div class="t r" style="left:1081px;width:120px;top:887px;">1.23112</div>
<div class="t r" style="left:1204px;width:222px;top:887px;color:#1515ff;">18 529</div>
<div class="t r" style="left:1429px;width:97px;top:887px;color:#1515ff;">0.12 %</div>
<div class="vl" style="left:178px;top:886px;height:20px;background:#c8c8c8"></div>
<div class="vl" style="left:289px;top:886px;height:20px;background:#c8c8c8"></div>
<div class="vl" style="left:375px;top:886px;height:20px;background:#c8c8c8"></div>
<div class="vl" style="left:449px;top:886px;height:20px;background:#c8c8c8"></div>
<div class="vl" style="left:572px;top:886px;height:20px;background:#c8c8c8"></div>
<div class="vl" style="left:695px;top:886px;height:20px;background:#c8c8c8"></div>
<div class="vl" style="left:818px;top:886px;height:20px;background:#c8c8c8"></div>
<div class="vl" style="left:941px;top:886px;height:20px;background:#c8c8c8"></div>
<div class="vl" style="left:1081px;top:886px;height:20px;background:#c8c8c8"></div>
<div class="vl" style="left:1204px;top:886px;height:20px;background:#c8c8c8"></div>
<div class="vl" style="left:1429px;top:886px;height:20px;background:#c8c8c8"></div>
<div class="vl" style="left:1529px;top:886px;height:20px;background:#c8c8c8"></div>
<div class="hl" style="left:19px;top:146px;width:1511px;background:#c4c4c4"></div>
<div class="hl" style="left:19px;top:166px;width:1511px;background:#c4c4c4"></div>
<div class="hl" style="left:19px;top:186px;width:1511px;background:#c4c4c4"></div>
<div class="hl" style="left:19px;top:206px;width:1511px;background:#c4c4c4"></div>
<div class="hl" style="left:19px;top:226px;width:1511px;background:#c4c4c4"></div>
<div class="hl" style="left:19px;top:246px;width:1511px;background:#c4c4c4"></div>
<div class="hl" style="left:19px;top:266px;width:1511px;background:#c4c4c4"></div>
<div class="hl" style="left:19px;top:286px;width:1511px;background:#c4c4c4"></div>
<div class="hl" style="left:19px;top:306px;width:1511px;background:#c4c4c4"></div>
<div class="hl" style="left:19px;top:326px;width:1511px;background:#c4c4c4"></div>
<div class="hl" style="left:19px;top:346px;width:1511px;background:#c4c4c4"></div>
<div class="hl" style="left:19px;top:366px;width:1511px;background:#c4c4c4"></div>
<div class="hl" style="left:19px;top:386px;width:1511px;background:#c4c4c4"></div>
<div class="hl" style="left:19px;top:406px;width:1511px;background:#c4c4c4"></div>
<div class="hl" style="left:19px;top:426px;width:1511px;background:#c4c4c4"></div>
<div class="hl" style="left:19px;top:446px;width:1511px;background:#c4c4c4"></div>
<div class="hl" style="left:19px;top:466px;width:1511px;background:#c4c4c4"></div>
<div class="hl" style="left:19px;top:486px;width:1511px;background:#c4c4c4"></div>
<div class="hl" style="left:19px;top:506px;width:1511px;background:#c4c4c4"></div>
<div class="hl" style="left:19px;top:526px;width:1511px;background:#c4c4c4"></div>
<div class="hl" style="left:19px;top:546px;width:1511px;background:#c4c4c4"></div>
<div class="hl" style="left:19px;top:566px;width:1511px;background:#c4c4c4"></div>
<div class="hl" style="left:19px;top:586px;width:1511px;background:#c4c4c4"></div>
<div class="hl" style="left:19px;top:606px;width:1511px;background:#c4c4c4"></div>
<div class="hl" style="left:19px;top:626px;width:1511px;background:#c4c4c4"></div>
<div class="hl" style="left:19px;top:646px;width:1511px;background:#c4c4c4"></div>
<div class="hl" style="left:19px;top:666px;width:1511px;background:#c4c4c4"></div>
<div class="hl" style="left:19px;top:686px;width:1511px;background:#c4c4c4"></div>
<div class="hl" style="left:19px;top:706px;width:1511px;background:#c4c4c4"></div>
<div class="hl" style="left:19px;top:726px;width:1511px;background:#c4c4c4"></div>
<div class="hl" style="left:19px;top:746px;width:1511px;background:#c4c4c4"></div>
<div class="hl" style="left:19px;top:766px;width:1511px;background:#c4c4c4"></div>
<div class="hl" style="left:19px;top:786px;width:1511px;background:#c4c4c4"></div>
<div class="hl" style="left:19px;top:806px;width:1511px;background:#c4c4c4"></div>
<div class="hl" style="left:19px;top:826px;width:1511px;background:#c4c4c4"></div>
<div class="hl" style="left:19px;top:846px;width:1511px;background:#c4c4c4"></div>
<div class="hl" style="left:19px;top:866px;width:1511px;background:#c4c4c4"></div>
<div class="hl" style="left:19px;top:886px;width:1511px;background:#c4c4c4"></div>
<div class="hl" style="left:19px;top:906px;width:1511px;background:#c4c4c4"></div>
<div class="a" style="left:1530px;top:103px;width:1px;height:802px;background:#fff"></div>
<div class="a" style="left:1531px;top:103px;width:17px;height:802px;background:#f0f0f0"></div>
<div class="a" style="left:1531px;top:454px;width:15px;height:401px;background:#cdcdcd"></div>
<svg class="a" style="left:1531px;top:103px" width="17" height="17"><path d="M4.5 11.5 L8.5 7 L12.5 11.5" fill="none" stroke="#505050" stroke-width="2"/></svg></body></html>
